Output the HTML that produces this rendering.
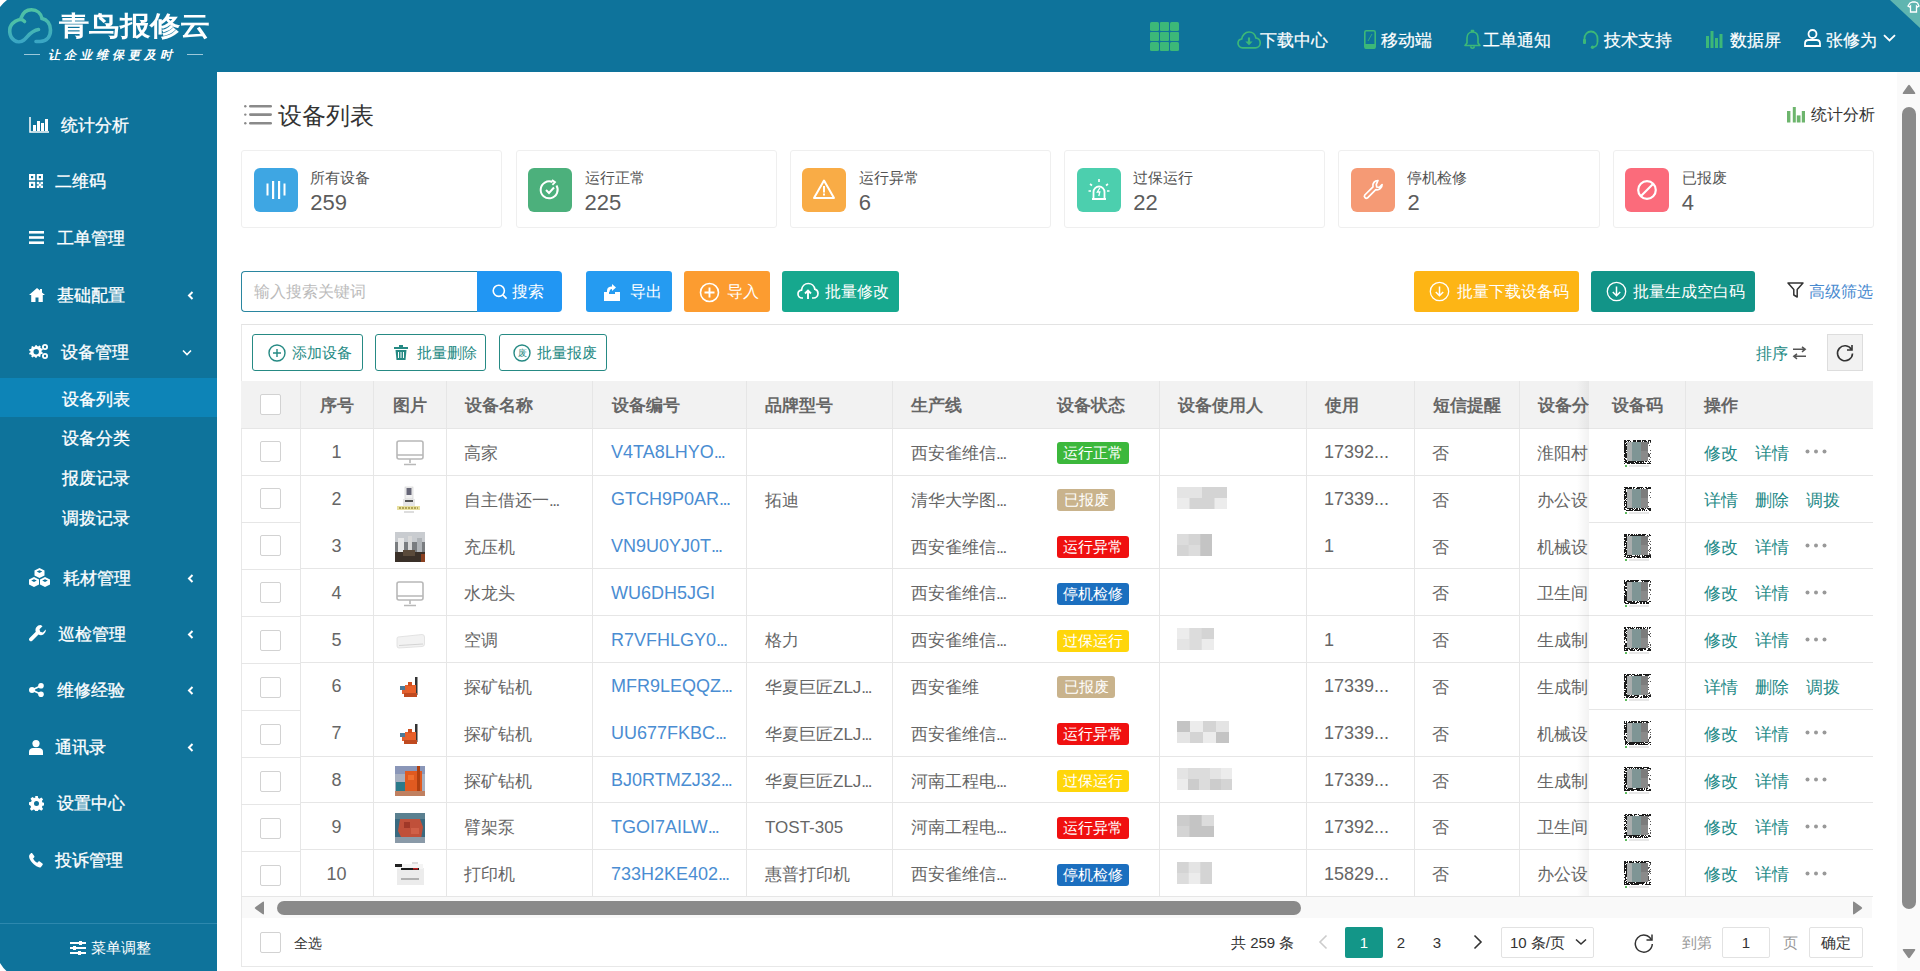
<!DOCTYPE html>
<html><head><meta charset="utf-8">
<style>
*{box-sizing:border-box;margin:0;padding:0}
html,body{width:1920px;height:971px;overflow:hidden;background:#fff;font-family:"Liberation Sans",sans-serif;color:#333}
.abs{position:absolute}
#hdr{position:absolute;left:0;top:0;width:1920px;height:72px;background:#0e739b;}
#side{position:absolute;left:0;top:72px;width:217px;height:899px;background:#0e739b}
.nav{position:absolute;top:31px;height:20px;line-height:20px;font-size:17px;-webkit-text-stroke:0.2px #fff;color:#fff;white-space:nowrap}
.mi{position:absolute;margin-top:-1px;left:0;width:217px;height:40px;color:#fff;font-size:17px;-webkit-text-stroke:0.3px #fff;line-height:40px;white-space:nowrap}
.mi .ic{position:absolute;left:29px;top:0;height:40px;display:flex;align-items:center}
.mi .tx{position:absolute;top:1px}
.mi .ch{position:absolute;left:184px;top:0;font-size:12px}
.sub{position:absolute;left:0;width:217px;height:40px;line-height:40px;color:#fff;font-size:17px;-webkit-text-stroke:0.3px #fff;padding-left:62px}
#main{position:absolute;left:217px;top:71px;width:1680px;height:900px;background:#fff}
.card{position:absolute;top:150px;width:261.2px;height:78px;border:1px solid #efefef;border-radius:3px;background:#fff}
.cl{position:absolute;left:68px;top:17px;font-size:15px;line-height:20px;color:#555}
.cn{position:absolute;left:68px;top:40px;font-size:22px;line-height:24px;color:#5c5c5c}
.btn{position:absolute;top:271px;height:41px;border-radius:3px;color:#fff;font-size:16px;line-height:22px;white-space:nowrap}
.obtn{position:absolute;top:334px;height:37px;border:1px solid #268a84;border-radius:3px;color:#268a84;font-size:15px;line-height:20px;white-space:nowrap;background:#fff}
.th{position:absolute;top:395px;font-size:17px;line-height:22px;font-weight:bold;color:#666;white-space:nowrap}
.td{position:absolute;font-size:17px;line-height:22px;color:#666;white-space:nowrap}
.td.lk{color:#4a8dd2}
.td.ak{color:#1f8a88}
.cb{position:absolute;width:21px;height:21px;border:1px solid #d2d2d2;border-radius:2px;background:#fff}
.bdg{position:absolute;height:22px;border-radius:3px;color:#fff;font-size:15px;line-height:22px;text-align:center;white-space:nowrap}
.blur{position:absolute;height:16px;background:linear-gradient(90deg,#ddd 0,#ccc 30%,#e4e4e4 55%,#bbb 80%,#e8e8e8 100%);filter:blur(1.5px)}
.dd{letter-spacing:-1.5px}
.td.lat{font-size:18px}
</style></head><body>
<div id="hdr">
  <div class="abs" style="left:59px;top:8px;font-size:30px;font-weight:bold;color:#fff;letter-spacing:0px;line-height:36px;transform:scale(1.01,0.9);transform-origin:0 55%">青鸟报修云</div>
  <div class="abs" style="left:24px;top:54px;width:16px;height:1px;background:#9cc8da"></div>
  <div class="abs" style="left:48px;top:46px;font-size:12px;color:#fff;letter-spacing:4px;line-height:18px;font-family:'Liberation Serif',serif;font-style:italic;font-weight:bold">让企业维保更及时</div>
  <div class="abs" style="left:187px;top:54px;width:16px;height:1px;background:#9cc8da"></div>

  <svg class="abs" style="left:0;top:0" width="60" height="50" viewBox="0 0 60 50"><defs><linearGradient id="cg" x1="0" y1="0" x2="0" y2="1"><stop offset="0" stop-color="#4fc3a3"/><stop offset="1" stop-color="#3aa6c4"/></linearGradient></defs><g stroke="url(#cg)" stroke-width="3.6" fill="none" stroke-linecap="round"><path d="M24.500 21.500C21.500 17.500 15.500 20.500 12.500 23.500C8.500 27.500 8.500 36.500 14.500 40.500C17 42.300 21 42.300 24 40C28 36.500 31 30.500 38.500 29.500"/><path d="M21 18C23 12.500 27 9.800 31.500 9.800C37 9.800 41 13.500 42 18.500C47 19.500 50.500 24 50.500 30C50.500 37 46.500 41.500 40 41.500H36"/></g></svg>
  <svg class="abs" style="left:1150px;top:22px" width="29" height="29" viewBox="0 0 29 29" fill="#3cb878"><rect x="0" y="0" width="9" height="9" rx="1.5"/><rect x="10" y="0" width="9" height="9" rx="1"/><rect x="20" y="0" width="9" height="9" rx="1.5"/><rect x="0" y="10" width="9" height="9" rx="1"/><rect x="10" y="10" width="9" height="9" rx="1"/><rect x="20" y="10" width="9" height="9" rx="1"/><rect x="0" y="20" width="9" height="9" rx="1.5"/><rect x="10" y="20" width="9" height="9" rx="1"/><rect x="20" y="20" width="9" height="9" rx="1.5"/></svg>
  <svg class="abs" style="left:1237px;top:31px" width="24" height="18" viewBox="0 0 24 18"><path d="M5.500 16.800C3 16.800 1 14.800 1 12.300c0-2.200 1.600-4 3.700-4.300C5.200 4.200 8.300 1 12 1c3.500 0 6.300 2.600 6.900 6 2.500.3 4.300 2.400 4.300 4.900 0 2.700-2.200 4.900-4.900 4.900z" stroke="#3cb878" stroke-width="1.700" fill="none"/><path d="M12 6.500v6" stroke="#3cb878" stroke-width="2.200"/><path d="M8.300 10.500h7.400L12 14.300z" fill="#3cb878"/></svg>
  <svg class="abs" style="left:1364px;top:30px" width="12" height="19" viewBox="0 0 12 19"><rect x="0.800" y="0.800" width="10.400" height="17.400" rx="1.500" stroke="#3cb878" stroke-width="1.600" fill="none"/><rect x="1" y="14" width="10" height="4.500" fill="#3cb878"/><path d="M8 4L4 11" stroke="#3cb878" stroke-width="0.8"/></svg>
  <svg class="abs" style="left:1464px;top:29px" width="17" height="20" viewBox="0 0 17 20"><path d="M8.500 3C5 3 3 5.500 3 9v5l-2 2.500h15L14 14V9c0-3.500-2-6-5.500-6zM6.500 17.500c.3 1 1 1.700 2 1.700s1.700-.7 2-1.700M7.500 3V1.500h2V3" stroke="#3cb878" stroke-width="1.600" fill="none" stroke-linejoin="round"/></svg>
  <svg class="abs" style="left:1582px;top:30px" width="18" height="19" viewBox="0 0 18 19"><path d="M2.500 11V8.500C2.500 4.500 5.300 1.500 9 1.500s6.500 3 6.500 7V12" stroke="#3cb878" stroke-width="1.800" fill="none"/><path d="M15.500 12c0 3-2 5-5 5.300" stroke="#3cb878" stroke-width="1.600" fill="none"/><rect x="1" y="9" width="3" height="5" rx="1" fill="#3cb878"/><circle cx="10.500" cy="17.300" r="1.700" fill="#3cb878"/></svg>
  <svg class="abs" style="left:1706px;top:31px" width="17" height="17" viewBox="0 0 17 17" fill="#3cb878"><rect x="0" y="5" width="3" height="12"/><rect x="4.500" y="0" width="3" height="17"/><rect x="9" y="7" width="3" height="10"/><rect x="13.500" y="3" width="3" height="14"/></svg>
  <svg class="abs" style="left:1804px;top:29px" width="17" height="18" viewBox="0 0 17 18"><circle cx="8.500" cy="5" r="4" stroke="#fff" stroke-width="1.800" fill="none"/><path d="M1 17v-2.500c0-2 1.500-3.500 3.500-3.500h8c2 0 3.500 1.500 3.500 3.500V17z" stroke="#fff" stroke-width="1.800" fill="none"/></svg>
  <svg class="abs" style="left:1883px;top:34px" width="13" height="8" viewBox="0 0 13 8"><path d="M1 1.200l5.500 5.300 5.500-5.300" stroke="#fff" stroke-width="1.800" fill="none"/></svg>
  <svg class="abs" style="left:1890px;top:0" width="30" height="28" viewBox="0 0 30 28"><path d="M0 0H30V28z" fill="#5fb5b0"/><path d="M20 3l2.500-1h2.500l2.500 1 1.500 3-1.500 1-1-1v6h-6V6l-1 1-1.500-1z" stroke="#fff" stroke-width="1.300" fill="none"/></svg>
  <div class="nav" style="left:1260px">下载中心</div>
  <div class="nav" style="left:1381px">移动端</div>
  <div class="nav" style="left:1483px">工单通知</div>
  <div class="nav" style="left:1604px">技术支持</div>
  <div class="nav" style="left:1730px">数据屏</div>
  <div class="nav" style="left:1826px">张修为</div>
</div>
<div id="side">
  <!-- 统计分析 -->
  <div class="mi" style="top:34px"><svg class="abs" style="left:29px;top:12px" width="20" height="16" viewBox="0 0 20 16"><path d="M1 0V15H20" stroke="#fff" stroke-width="1.5" fill="none"/><rect x="4" y="8" width="3" height="6" fill="#fff"/><rect x="8" y="4" width="3" height="10" fill="#fff"/><rect x="12" y="6" width="3" height="8" fill="#fff"/><rect x="16" y="2" width="3" height="12" fill="#fff"/></svg><span class="tx" style="left:61px">统计分析</span></div>
  <!-- 二维码 -->
  <div class="mi" style="top:90px"><svg class="abs" style="left:29px;top:13px" width="14" height="14" viewBox="0 0 14 14" fill="#fff"><path d="M0 0h6.200v6.200H0zM2 2v2.200h2.200V2zM7.800 0H14v6.200H7.800zM9.800 2v2.200H12V2zM0 7.800h6.200V14H0zM2 9.800V12h2.200V9.800z" fill-rule="evenodd"/><rect x="7.800" y="7.800" width="2.500" height="2.500"/><rect x="11.500" y="7.800" width="2.500" height="2.500"/><rect x="9.700" y="9.700" width="2.500" height="2.500"/><rect x="7.800" y="11.500" width="2.500" height="2.500"/><rect x="11.500" y="11.500" width="2.500" height="2.500"/></svg><span class="tx" style="left:55px">二维码</span></div>
  <!-- 工单管理 -->
  <div class="mi" style="top:147px"><svg class="abs" style="left:29px;top:13px" width="15" height="13" viewBox="0 0 15 13" fill="#fff"><rect y="0" width="15" height="2.6"/><rect y="5.2" width="15" height="2.6"/><rect y="10.4" width="15" height="2.6"/></svg><span class="tx" style="left:57px">工单管理</span></div>
  <!-- 基础配置 -->
  <div class="mi" style="top:204px"><svg class="abs" style="left:29px;top:13px" width="16" height="14" viewBox="0 0 16 14" fill="#fff"><path d="M8 0L0 7h2.2v7h4.3V9.5h3V14h4.3V7H16L13 4.4V1h-2v1.6z"/></svg><span class="tx" style="left:57px">基础配置</span><svg class="abs" style="left:187px;top:16px" width="7" height="9" viewBox="0 0 7 9"><path d="M5.5 1L2 4.5 5.5 8" stroke="#fff" stroke-width="2" fill="none"/></svg></div>
  <!-- 设备管理 -->
  <div class="mi" style="top:261px"><svg class="abs" style="left:29px;top:11px" width="20" height="17" viewBox="0 0 20 17" fill="#fff"><path d="M7 3l1.3.4.9-1 1.5.9-.4 1.3.9 1 1.3-.2.4 1.7-1.3.5v1.3l1.3.5-.4 1.7-1.3-.2-.9 1 .4 1.3-1.5.9-.9-1-1.3.4-.3 1.3H5.3L5 14l-1.3-.4-.9 1-1.5-.9.4-1.3-.9-1L-.5 11.6-.9 9.9l1.3-.5V8.1L-.9 7.6-.5 5.9.8 6.1l.9-1L1.3 3.8l1.5-.9.9 1L5 3.5 5.3 2.2h1.7zM6.2 6a2.7 2.7 0 100 5.4 2.7 2.7 0 000-5.4z" transform="translate(1,0)"/><circle cx="16" cy="4" r="3" /><circle cx="16" cy="4" r="1.2" fill="#0e739b"/><circle cx="16" cy="13" r="3"/><circle cx="16" cy="13" r="1.2" fill="#0e739b"/></svg><span class="tx" style="left:61px">设备管理</span><svg class="abs" style="left:182px;top:17px" width="10" height="7" viewBox="0 0 10 7"><path d="M1 1.5l4 4 4-4" stroke="#fff" stroke-width="1.6" fill="none"/></svg></div>
  <div class="abs" style="left:0;top:306px;width:217px;height:39px;background:#0d84b7"></div>
  <div class="sub" style="top:308px">设备列表</div>
  <div class="sub" style="top:347px">设备分类</div>
  <div class="sub" style="top:387px">报废记录</div>
  <div class="sub" style="top:427px">调拨记录</div>
  <!-- 耗材管理 -->
  <div class="mi" style="top:487px"><svg class="abs" style="left:29px;top:10px" width="21" height="19" viewBox="0 0 21 19" fill="#fff"><path d="M10.5 0l5 2.5v5l-5 2.5-5-2.5v-5z"/><path d="M5 9l5 2.5v5L5 19 0 16.5v-5z"/><path d="M16 9l5 2.5v5L16 19l-5-2.5v-5z"/><path d="M10.5 2.2l2.8 1.4-2.8 1.4-2.8-1.4zM5 11.2l2.8 1.4L5 14l-2.8-1.4zM16 11.2l2.8 1.4L16 14l-2.8-1.4z" fill="#0e739b"/></svg><span class="tx" style="left:63px">耗材管理</span><svg class="abs" style="left:187px;top:16px" width="7" height="9" viewBox="0 0 7 9"><path d="M5.5 1L2 4.5 5.5 8" stroke="#fff" stroke-width="2" fill="none"/></svg></div>
  <!-- 巡检管理 -->
  <div class="mi" style="top:543px"><svg class="abs" style="left:29px;top:11px" width="17" height="17" viewBox="0 0 17 17" fill="#fff"><path d="M11.5 0a5 5 0 00-4.7 6.8L.6 13a1.9 1.9 0 002.7 2.7l6.2-6.2A5 5 0 0016.8 4.5l-3 3-2.6-.7-.7-2.6 3-3A5 5 0 0011.5 0z"/></svg><span class="tx" style="left:58px">巡检管理</span><svg class="abs" style="left:187px;top:16px" width="7" height="9" viewBox="0 0 7 9"><path d="M5.5 1L2 4.5 5.5 8" stroke="#fff" stroke-width="2" fill="none"/></svg></div>
  <!-- 维修经验 -->
  <div class="mi" style="top:599px"><svg class="abs" style="left:29px;top:13px" width="15" height="14" viewBox="0 0 15 14" fill="#fff"><circle cx="3" cy="7" r="3"/><circle cx="12" cy="2.8" r="2.8"/><circle cx="12" cy="11.2" r="2.8"/><path d="M3 7L12 2.8M3 7l9 4.2" stroke="#fff" stroke-width="1.8"/></svg><span class="tx" style="left:57px">维修经验</span><svg class="abs" style="left:187px;top:16px" width="7" height="9" viewBox="0 0 7 9"><path d="M5.5 1L2 4.5 5.5 8" stroke="#fff" stroke-width="2" fill="none"/></svg></div>
  <!-- 通讯录 -->
  <div class="mi" style="top:656px"><svg class="abs" style="left:29px;top:13px" width="14" height="15" viewBox="0 0 14 15" fill="#fff"><circle cx="7" cy="3.6" r="3.6"/><path d="M0 15v-3.5C0 9.3 2 8 4 8h6c2 0 4 1.3 4 3.5V15z"/></svg><span class="tx" style="left:55px">通讯录</span><svg class="abs" style="left:187px;top:16px" width="7" height="9" viewBox="0 0 7 9"><path d="M5.5 1L2 4.5 5.5 8" stroke="#fff" stroke-width="2" fill="none"/></svg></div>
  <!-- 设置中心 -->
  <div class="mi" style="top:712px"><svg class="abs" style="left:29px;top:13px" width="15" height="15" viewBox="0 0 15 15" fill="#fff"><path d="M6.2 0h2.6l.4 2.1 1.3.6 1.8-1.2 1.8 1.8-1.2 1.8.6 1.3 2.1.4v2.6l-2.1.4-.6 1.3 1.2 1.8-1.8 1.8-1.8-1.2-1.3.6-.4 2.1H6.2l-.4-2.1-1.3-.6-1.8 1.2-1.8-1.8 1.2-1.8-.6-1.3L0 8.8V6.2l2.1-.4.6-1.3-1.2-1.8 1.8-1.8 1.8 1.2 1.3-.6zM7.5 5a2.5 2.5 0 100 5 2.5 2.5 0 000-5z" fill-rule="evenodd"/></svg><span class="tx" style="left:57px">设置中心</span></div>
  <!-- 投诉管理 -->
  <div class="mi" style="top:769px"><svg class="abs" style="left:29px;top:13px" width="15" height="15" viewBox="0 0 15 15" fill="#fff"><path d="M3.2.3l2 2.6c.4.5.3 1.1-.1 1.5l-1 1c.8 1.8 2.3 3.4 4.2 4.3l1-1c.4-.4 1.1-.5 1.5-.1l2.6 2c.5.4.5 1 .1 1.5l-1.5 1.8C10.700 15.900 4.300 12 1.400 7.300-.3 4.500-.4 2.200 1.200 1l.5-.5c.4-.5 1.100-.5 1.500-.2z"/></svg><span class="tx" style="left:55px">投诉管理</span></div>
  <div class="abs" style="left:0;top:851px;width:217px;height:1px;background:#2d88ae"></div>
  <svg class="abs" style="left:70px;top:869px" width="16" height="14" viewBox="0 0 16 14" fill="#fff"><rect y="1" width="16" height="2"/><rect y="6" width="16" height="2"/><rect y="11" width="16" height="2"/><rect x="9" y="0" width="3" height="4"/><rect x="3" y="5" width="3" height="4"/><rect x="8" y="10" width="3" height="4"/></svg>
  <div class="abs" style="left:91px;top:865px;font-size:15px;line-height:22px;color:#fff">菜单调整</div>
</div>
<!--MAIN1-->
<svg class="abs" style="left:244px;top:105px" width="28" height="20" viewBox="0 0 28 20" fill="#8a8a8a"><circle cx="1.3" cy="1.300" r="1.200"/><circle cx="1.300" cy="9.600" r="1.200"/><circle cx="1.300" cy="18.300" r="1.200"/><rect x="5" y="0" width="23" height="2.600" rx="1.300"/><rect x="5" y="8.300" width="23" height="2.600" rx="1.300"/><rect x="5" y="17" width="23" height="2.600" rx="1.300"/></svg>
<div class="abs" style="left:278px;top:100px;font-size:24px;line-height:32px;color:#333">设备列表</div>
<svg class="abs" style="left:1787px;top:107px" width="18" height="16" viewBox="0 0 18 16" fill="#6db56d"><rect x="0" y="4" width="3.400" height="11.500"/><rect x="5.800" y="0" width="3" height="15.500"/><rect x="9.800" y="8.400" width="3.700" height="7.100"/><rect x="14.800" y="4" width="3.200" height="11.500"/></svg>
<div class="abs" style="left:1811px;top:104px;font-size:16px;line-height:22px;color:#333">统计分析</div>

<div class="card" style="left:241.25px"><svg class="abs" style="left:11.5px;top:17px;border-radius:6px;background:#3ea6e3" width="44" height="44" viewBox="0 0 44 44"><rect x="12.5" y="15.5" width="2" height="12" fill="#fff"/><rect x="18" y="13" width="2.2" height="18" fill="#fff"/><rect x="24" y="13" width="2.2" height="18" fill="#fff"/><rect x="29.5" y="15.5" width="2" height="12" fill="#fff"/></svg><div class="cl">所有设备</div><div class="cn">259</div></div>
<div class="card" style="left:515.55px"><svg class="abs" style="left:11.5px;top:17px;border-radius:6px;background:#4cb07c" width="44" height="44" viewBox="0 0 44 44"><path d="M28.5 17.5A8.5 8.5 0 1 1 24.500 14" stroke="#fff" stroke-width="2" fill="none"/><path d="M24 12l3 2.2-2.6 2.600" stroke="#fff" stroke-width="1.800" fill="none"/><path d="M18 22l3 3 5-5.500" stroke="#fff" stroke-width="2" fill="none"/></svg><div class="cl">运行正常</div><div class="cn">225</div></div>
<div class="card" style="left:789.85px"><svg class="abs" style="left:11.5px;top:17px;border-radius:6px;background:#f9ac46" width="44" height="44" viewBox="0 0 44 44"><path d="M22 12.500L32 30H12z" stroke="#fff" stroke-width="2" fill="none" stroke-linejoin="round"/><rect x="21" y="18" width="2" height="6.500" fill="#fff"/><rect x="21" y="25.500" width="2" height="2" fill="#fff"/></svg><div class="cl">运行异常</div><div class="cn">6</div></div>
<div class="card" style="left:1064.15px"><svg class="abs" style="left:11.5px;top:17px;border-radius:6px;background:#4ccfae" width="44" height="44" viewBox="0 0 44 44"><path d="M15 31h14M16.500 31v-7a5.500 5.500 0 0 1 11 0v7" stroke="#fff" stroke-width="1.800" fill="none"/><path d="M22 11v3M13 16l2 1.500M31 16l-2 1.500M11.500 23h2.500M30 23h2.500" stroke="#fff" stroke-width="1.600"/><path d="M22.800 20l-2.500 4h2.500l-1 4" stroke="#fff" stroke-width="1.300" fill="none"/></svg><div class="cl">过保运行</div><div class="cn">22</div></div>
<div class="card" style="left:1338.45px"><svg class="abs" style="left:11.5px;top:17px;border-radius:6px;background:#f59a75" width="44" height="44" viewBox="0 0 44 44"><path d="M27 12.500a5 5 0 0 0-5 6.300l-8.200 8.200a2 2 0 0 0 2.800 2.800l8.200-8.200a5 5 0 0 0 6.300-5l-2.800 2.800-2.600-.4-.4-2.600z" stroke="#fff" stroke-width="1.700" fill="none" stroke-linejoin="round"/></svg><div class="cl">停机检修</div><div class="cn">2</div></div>
<div class="card" style="left:1612.75px"><svg class="abs" style="left:11.5px;top:17px;border-radius:6px;background:#fb6b7b" width="44" height="44" viewBox="0 0 44 44"><circle cx="22" cy="22" r="8.800" stroke="#fff" stroke-width="2.200" fill="none"/><path d="M16 28l12-12" stroke="#fff" stroke-width="2.200"/></svg><div class="cl">已报废</div><div class="cn">4</div></div>
<!--/MAIN1-->
<!--MAIN2-->
<div class="abs" style="left:241px;top:271px;width:237px;height:41px;border:1px solid #2a86a0;border-right:none;border-radius:4px 0 0 4px;background:#fff"></div>
<div class="abs" style="left:254px;top:281px;font-size:16px;line-height:22px;color:#bbb">输入搜索关键词</div>
<div class="btn" style="left:477px;width:85px;background:#2196f3;border-radius:0 4px 4px 0"><svg class="abs" style="left:15px;top:13px" width="16" height="16" viewBox="0 0 16 16"><circle cx="6.800" cy="6.800" r="5.600" stroke="#fff" stroke-width="1.600" fill="none"/><path d="M10.800 10.800l3.800 3.800" stroke="#fff" stroke-width="1.800"/></svg><span class="abs" style="left:35px;top:9.5px">搜索</span></div>
<div class="btn" style="left:586px;width:86px;background:#259bf1"><svg class="abs" style="left:17px;top:11px" width="18" height="19" viewBox="0 0 18 19" fill="#fff"><path d="M1 10h5v2h6v-2h5v9H1z"/><path d="M4 10V8.500C4 6 6 4.500 9 4.500V2l4 3.500-4 3.500V7C7.500 7 6.500 8 6.500 10z"/></svg><span class="abs" style="left:44px;top:9.5px">导出</span></div>
<div class="btn" style="left:684px;width:86px;background:#fc9c30"><svg class="abs" style="left:15px;top:11px" width="21" height="21" viewBox="0 0 21 21"><circle cx="10.500" cy="10.500" r="9" stroke="#fff" stroke-width="1.600" fill="none"/><path d="M10.500 5.500v10M5.500 10.500h10" stroke="#fff" stroke-width="1.900"/></svg><span class="abs" style="left:43px;top:9.5px">导入</span></div>
<div class="btn" style="left:782px;width:117px;background:#16a88e"><svg class="abs" style="left:15px;top:11px" width="22" height="18" viewBox="0 0 22 18"><path d="M6 16H5C2.800 16 1 14.200 1 12c0-2 1.500-3.700 3.500-3.900C5 4.300 7.800 1.500 11.300 1.500c3.300 0 6 2.500 6.500 5.700 1.800.4 3.200 2.100 3.200 4.300 0 2.500-2 4.500-4.500 4.500H15" stroke="#fff" stroke-width="1.700" fill="none"/><path d="M11 17V9M8 11.500l3-3 3 3" stroke="#fff" stroke-width="1.900" fill="none"/></svg><span class="abs" style="left:43px;top:9.5px">批量修改</span></div>
<div class="btn" style="left:1414px;width:165px;background:#fdb515"><svg class="abs" style="left:15px;top:10px" width="21" height="21" viewBox="0 0 21 21"><circle cx="10.500" cy="10.500" r="9.200" stroke="#fff" stroke-width="1.300" fill="none"/><path d="M10.500 5.500v9M6.800 11l3.700 3.700 3.700-3.700" stroke="#fff" stroke-width="1.500" fill="none"/></svg><span class="abs" style="left:43px;top:9.5px">批量下载设备码</span></div>
<div class="btn" style="left:1591px;width:164px;background:#129488"><svg class="abs" style="left:15px;top:10px" width="21" height="21" viewBox="0 0 21 21"><circle cx="10.500" cy="10.500" r="9.200" stroke="#fff" stroke-width="1.300" fill="none"/><path d="M10.500 5.500v9M6.800 11l3.700 3.700 3.700-3.700" stroke="#fff" stroke-width="1.500" fill="none"/></svg><span class="abs" style="left:42px;top:9.5px">批量生成空白码</span></div>
<svg class="abs" style="left:1787px;top:282px" width="17" height="16" viewBox="0 0 17 16"><path d="M1 1h15l-5.800 6.500V15l-3.400-2V7.500z" stroke="#333" stroke-width="1.500" fill="none" stroke-linejoin="round"/></svg>
<div class="abs" style="left:1809px;top:280.5px;font-size:15.6px;line-height:22px;color:#4a8bd0">高级筛选</div>

<div class="abs" style="left:241px;top:324px;width:1632px;height:643px;border:1px solid #e8e8e8;border-right:none;border-top-color:#e3e3e3"></div>
<div class="obtn" style="left:252px;width:111px"><svg class="abs" style="left:15px;top:9px" width="18" height="18" viewBox="0 0 18 18"><circle cx="9" cy="9" r="8" stroke="#268a84" stroke-width="1.400" fill="none"/><path d="M9 5v8M5 9h8" stroke="#268a84" stroke-width="1.400"/></svg><span class="abs" style="left:39px;top:8px">添加设备</span></div>
<div class="obtn" style="left:375px;width:111px"><svg class="abs" style="left:18px;top:10px" width="14" height="15" viewBox="0 0 14 15" fill="#268a84"><rect x="0" y="2" width="14" height="2"/><rect x="5" y="0" width="4" height="2"/><path d="M1.500 5h11l-1 10h-9z"/><path d="M4.500 7v6M7 7v6M9.500 7v6" stroke="#fff" stroke-width="1"/></svg><span class="abs" style="left:41px;top:8px">批量删除</span></div>
<div class="obtn" style="left:499px;width:108px"><svg class="abs" style="left:13px;top:9px" width="18" height="18" viewBox="0 0 18 18"><circle cx="9" cy="9" r="8" stroke="#268a84" stroke-width="1.400" fill="none"/><text x="9" y="12.300" font-size="8.500" text-anchor="middle" fill="#268a84">废</text></svg><span class="abs" style="left:37px;top:8px">批量报废</span></div>
<div class="abs" style="left:1756px;top:343px;font-size:16px;line-height:22px;color:#268a84">排序</div>
<svg class="abs" style="left:1792px;top:346px" width="15" height="14" viewBox="0 0 15 14"><path d="M1 3.300H13M10 0.800l3.200 2.500-3.200 2.500M14 10.300H2M5 7.800l-3.200 2.500 3.200 2.500" stroke="#555" stroke-width="1.500" fill="none"/></svg>
<div class="abs" style="left:1827px;top:334px;width:36px;height:37px;background:#f2f2f2;border:1px solid #ddd"><svg class="abs" style="left:7px;top:8px" width="20" height="20" viewBox="0 0 20 20"><path d="M16.500 6.500A7.500 7.500 0 1 0 17.500 10.500" stroke="#333" stroke-width="1.600" fill="none"/><path d="M17 2v5h-5" stroke="#333" stroke-width="1.600" fill="none"/></svg></div>

<!--/MAIN2-->
<!--MAIN3-->
<div class="abs" style="left:241px;top:381px;width:1632px;height:47px;background:#f2f2f2"></div>
<div class="abs" style="left:300px;top:381px;width:1px;height:515px;background:#e6e6e6"></div>
<div class="abs" style="left:373px;top:381px;width:1px;height:515px;background:#e6e6e6"></div>
<div class="abs" style="left:446px;top:381px;width:1px;height:515px;background:#e6e6e6"></div>
<div class="abs" style="left:592px;top:381px;width:1px;height:515px;background:#e6e6e6"></div>
<div class="abs" style="left:746px;top:381px;width:1px;height:515px;background:#e6e6e6"></div>
<div class="abs" style="left:892px;top:381px;width:1px;height:515px;background:#e6e6e6"></div>
<div class="abs" style="left:1159px;top:381px;width:1px;height:515px;background:#e6e6e6"></div>
<div class="abs" style="left:1306px;top:381px;width:1px;height:515px;background:#e6e6e6"></div>
<div class="abs" style="left:1414px;top:381px;width:1px;height:515px;background:#e6e6e6"></div>
<div class="abs" style="left:1519px;top:381px;width:1px;height:515px;background:#e6e6e6"></div>
<div class="abs" style="left:241px;top:428.0px;width:59px;height:1px;background:#e6e6e6"></div>
<div class="abs" style="left:300px;top:428.0px;width:1289px;height:1px;background:#e6e6e6"></div>
<div class="abs" style="left:241px;top:475.0px;width:59px;height:1px;background:#e6e6e6"></div>
<div class="abs" style="left:300px;top:474.8px;width:1289px;height:1px;background:#e6e6e6"></div>
<div class="abs" style="left:241px;top:522.1px;width:59px;height:1px;background:#e6e6e6"></div>
<div class="abs" style="left:241px;top:569.1px;width:59px;height:1px;background:#e6e6e6"></div>
<div class="abs" style="left:300px;top:568.4px;width:1289px;height:1px;background:#e6e6e6"></div>
<div class="abs" style="left:241px;top:616.1px;width:59px;height:1px;background:#e6e6e6"></div>
<div class="abs" style="left:300px;top:615.2px;width:1289px;height:1px;background:#e6e6e6"></div>
<div class="abs" style="left:241px;top:663.1px;width:59px;height:1px;background:#e6e6e6"></div>
<div class="abs" style="left:300px;top:662.0px;width:1289px;height:1px;background:#e6e6e6"></div>
<div class="abs" style="left:241px;top:710.2px;width:59px;height:1px;background:#e6e6e6"></div>
<div class="abs" style="left:241px;top:757.2px;width:59px;height:1px;background:#e6e6e6"></div>
<div class="abs" style="left:300px;top:755.6px;width:1289px;height:1px;background:#e6e6e6"></div>
<div class="abs" style="left:241px;top:804.2px;width:59px;height:1px;background:#e6e6e6"></div>
<div class="abs" style="left:300px;top:802.4px;width:1289px;height:1px;background:#e6e6e6"></div>
<div class="abs" style="left:241px;top:851.3px;width:59px;height:1px;background:#e6e6e6"></div>
<div class="abs" style="left:300px;top:849.2px;width:1289px;height:1px;background:#e6e6e6"></div>
<div class="abs" style="left:241px;top:896.0px;width:59px;height:1px;background:#e6e6e6"></div>
<div class="abs" style="left:300px;top:896.0px;width:1289px;height:1px;background:#e6e6e6"></div>
<div class="th" style="left:300px;width:73px;text-align:center">序号</div>
<div class="th" style="left:373px;width:73px;text-align:center">图片</div>
<div class="th" style="left:465px">设备名称</div>
<div class="th" style="left:612px">设备编号</div>
<div class="th" style="left:765px">品牌型号</div>
<div class="th" style="left:911px">生产线</div>
<div class="th" style="left:1057px">设备状态</div>
<div class="th" style="left:1178px">设备使用人</div>
<div class="th" style="left:1325px">使用</div>
<div class="th" style="left:1433px">短信提醒</div>
<div class="th" style="left:1538px">设备分类</div>
<div class="cb" style="left:260px;top:394px"></div>
<div class="cb" style="left:260px;top:440.9px"></div>
<div class="td lat" style="left:300px;width:73px;text-align:center;top:441.4px">1</div>
<svg class="abs" style="left:396px;top:440.4px" width="28" height="26" viewBox="0 0 28 26"><rect x="1" y="1" width="26" height="18" rx="2" stroke="#b8b8b8" stroke-width="1.600" fill="none"/><path d="M1 15h26M14 19v4M8 24.500h12" stroke="#b8b8b8" stroke-width="1.600"/></svg>
<div class="td" style="left:464px;top:442.9px">高家</div>
<div class="td lk lat" style="left:611px;top:441.4px">V4TA8LHYO<span class="dd">...</span></div>
<div class="td" style="left:911px;top:442.9px">西安雀维信<span class="dd">...</span></div>
<div class="bdg" style="left:1057px;top:442.4px;width:72px;background:#3cb83c">运行正常</div>
<div class="td lat" style="left:1324px;top:441.4px">17392...</div>
<div class="td" style="left:1432px;top:442.9px">否</div>
<div class="td" style="left:1537px;top:442.9px">淮阳村</div>
<div class="cb" style="left:260px;top:488.1px"></div>
<div class="td lat" style="left:300px;width:73px;text-align:center;top:488.2px">2</div>
<svg class="abs" style="left:396px;top:485.2px" width="25" height="30" viewBox="0 0 25 30"><rect x="9" y="2" width="8" height="12" fill="#f0f0f0" stroke="#ccc" stroke-width=".6"/><rect x="10.500" y="3" width="5" height="7" fill="#667"/><rect x="7" y="14" width="12" height="8" fill="#e6e6e6"/><rect x="9" y="15" width="8" height="2" fill="#555"/><rect x="1" y="21" width="23" height="4" fill="#e8e0a0"/><path d="M3 23h19" stroke="#7a6a10" stroke-width="1.200" stroke-dasharray="2 1"/><rect x="8" y="26" width="10" height="2" fill="#ddd"/></svg>
<div class="td" style="left:464px;top:489.7px">自主借还一<span class="dd">...</span></div>
<div class="td lk lat" style="left:611px;top:488.2px">GTCH9P0AR<span class="dd">...</span></div>
<div class="td" style="left:765px;top:489.7px">拓迪</div>
<div class="td" style="left:911px;top:489.7px">清华大学图<span class="dd">...</span></div>
<div class="bdg" style="left:1057px;top:489.2px;width:58px;background:#c9b38c">已报废</div>
<svg class="abs" style="left:1177px;top:487.2px;filter:blur(0.6px)" width="50" height="22" viewBox="0 0 50 22"><rect x="0.0" y="0" width="13.0" height="11" fill="rgb(228,228,228)"/><rect x="12.5" y="0" width="13.0" height="11" fill="rgb(228,228,228)"/><rect x="25.0" y="0" width="13.0" height="11" fill="rgb(212,212,212)"/><rect x="37.5" y="0" width="13.0" height="11" fill="rgb(212,212,212)"/><rect x="0.0" y="11" width="13.0" height="11" fill="rgb(236,236,236)"/><rect x="12.5" y="11" width="13.0" height="11" fill="rgb(212,212,212)"/><rect x="25.0" y="11" width="13.0" height="11" fill="rgb(212,212,212)"/><rect x="37.5" y="11" width="13.0" height="11" fill="rgb(236,236,236)"/></svg>
<div class="td lat" style="left:1324px;top:488.2px">17339...</div>
<div class="td" style="left:1432px;top:489.7px">否</div>
<div class="td" style="left:1537px;top:489.7px">办公设</div>
<div class="cb" style="left:260px;top:535.2px"></div>
<div class="td lat" style="left:300px;width:73px;text-align:center;top:535.0px">3</div>
<svg class="abs" style="left:395px;top:531.5px" width="30" height="30" viewBox="0 0 30 30"><rect width="30" height="30" fill="#7a7d80"/><rect width="30" height="10" fill="#c9ccd0"/><rect x="3" y="6" width="6" height="18" fill="#e8e8e8"/><rect x="13" y="4" width="4" height="20" fill="#d8d8d8"/><rect x="22" y="6" width="5" height="14" fill="#b0b4b8"/><rect y="20" width="30" height="10" fill="#3a3028"/><rect x="8" y="18" width="12" height="6" fill="#5a4a3a"/><rect x="26" y="22" width="4" height="8" fill="#8a4020"/></svg>
<div class="td" style="left:464px;top:536.5px">充压机</div>
<div class="td lk lat" style="left:611px;top:535.0px">VN9U0YJ0T<span class="dd">...</span></div>
<div class="td" style="left:911px;top:536.5px">西安雀维信<span class="dd">...</span></div>
<div class="bdg" style="left:1057px;top:536.0px;width:72px;background:#f01010">运行异常</div>
<svg class="abs" style="left:1177px;top:534.0px;filter:blur(0.6px)" width="35" height="22" viewBox="0 0 35 22"><rect x="0.0" y="0" width="12.2" height="11" fill="rgb(220,220,220)"/><rect x="11.7" y="0" width="12.2" height="11" fill="rgb(212,212,212)"/><rect x="23.3" y="0" width="12.2" height="11" fill="rgb(196,196,196)"/><rect x="0.0" y="11" width="12.2" height="11" fill="rgb(212,212,212)"/><rect x="11.7" y="11" width="12.2" height="11" fill="rgb(220,220,220)"/><rect x="23.3" y="11" width="12.2" height="11" fill="rgb(196,196,196)"/></svg>
<div class="td lat" style="left:1324px;top:535.0px">1</div>
<div class="td" style="left:1432px;top:536.5px">否</div>
<div class="td" style="left:1537px;top:536.5px">机械设</div>
<div class="cb" style="left:260px;top:582.4px"></div>
<div class="td lat" style="left:300px;width:73px;text-align:center;top:581.8px">4</div>
<svg class="abs" style="left:396px;top:580.8px" width="28" height="26" viewBox="0 0 28 26"><rect x="1" y="1" width="26" height="18" rx="2" stroke="#b8b8b8" stroke-width="1.600" fill="none"/><path d="M1 15h26M14 19v4M8 24.500h12" stroke="#b8b8b8" stroke-width="1.600"/></svg>
<div class="td" style="left:464px;top:583.3px">水龙头</div>
<div class="td lk lat" style="left:611px;top:581.8px">WU6DH5JGI</div>
<div class="td" style="left:911px;top:583.3px">西安雀维信<span class="dd">...</span></div>
<div class="bdg" style="left:1057px;top:582.8px;width:72px;background:#1b6fbf">停机检修</div>
<div class="td" style="left:1432px;top:583.3px">否</div>
<div class="td" style="left:1537px;top:583.3px">卫生间</div>
<div class="cb" style="left:260px;top:629.6px"></div>
<div class="td lat" style="left:300px;width:73px;text-align:center;top:628.6px">5</div>
<svg class="abs" style="left:396px;top:632.6px" width="29" height="16" viewBox="0 0 29 16"><path d="M2 4L26 1.500Q28.500 1.500 28.500 4V11Q28.500 13.500 26 13.500L3 15Q1 15 1 13V6Q1 4 2 4z" fill="#f2f2f2" stroke="#ddd" stroke-width=".8"/><path d="M3 12.500L27 11" stroke="#ccc" stroke-width=".8"/></svg>
<div class="td" style="left:464px;top:630.1px">空调</div>
<div class="td lk lat" style="left:611px;top:628.6px">R7VFHLGY0<span class="dd">...</span></div>
<div class="td" style="left:765px;top:630.1px">格力</div>
<div class="td" style="left:911px;top:630.1px">西安雀维信<span class="dd">...</span></div>
<div class="bdg" style="left:1057px;top:629.6px;width:72px;background:#ffd60a">过保运行</div>
<svg class="abs" style="left:1177px;top:627.6px;filter:blur(0.6px)" width="37" height="22" viewBox="0 0 37 22"><rect x="0.0" y="0" width="12.8" height="11" fill="rgb(236,236,236)"/><rect x="12.3" y="0" width="12.8" height="11" fill="rgb(220,220,220)"/><rect x="24.7" y="0" width="12.8" height="11" fill="rgb(212,212,212)"/><rect x="0.0" y="11" width="12.8" height="11" fill="rgb(228,228,228)"/><rect x="12.3" y="11" width="12.8" height="11" fill="rgb(220,220,220)"/><rect x="24.7" y="11" width="12.8" height="11" fill="rgb(236,236,236)"/></svg>
<div class="td lat" style="left:1324px;top:628.6px">1</div>
<div class="td" style="left:1432px;top:630.1px">否</div>
<div class="td" style="left:1537px;top:630.1px">生成制</div>
<div class="cb" style="left:260px;top:676.8px"></div>
<div class="td lat" style="left:300px;width:73px;text-align:center;top:675.4px">6</div>
<svg class="abs" style="left:400px;top:677.4px" width="20" height="22" viewBox="0 0 20 22"><rect x="15" y="0" width="2.500" height="18" fill="#333"/><rect x="5" y="8" width="11" height="9" fill="#e8602a"/><rect x="2" y="11" width="5" height="6" fill="#e06030"/><rect x="0" y="9" width="5" height="4" fill="#4a7a9a"/><rect x="4" y="16" width="13" height="4" fill="#c04a20"/><rect x="8" y="5" width="4" height="4" fill="#d05020"/></svg>
<div class="td" style="left:464px;top:676.9px">探矿钻机</div>
<div class="td lk lat" style="left:611px;top:675.4px">MFR9LEQQZ<span class="dd">...</span></div>
<div class="td" style="left:765px;top:676.9px">华夏巨匠ZLJ<span class="dd">...</span></div>
<div class="td" style="left:911px;top:676.9px">西安雀维</div>
<div class="bdg" style="left:1057px;top:676.4px;width:58px;background:#c9b38c">已报废</div>
<div class="td lat" style="left:1324px;top:675.4px">17339...</div>
<div class="td" style="left:1432px;top:676.9px">否</div>
<div class="td" style="left:1537px;top:676.9px">生成制</div>
<div class="cb" style="left:260px;top:723.9px"></div>
<div class="td lat" style="left:300px;width:73px;text-align:center;top:722.2px">7</div>
<svg class="abs" style="left:400px;top:724.2px" width="20" height="22" viewBox="0 0 20 22"><rect x="15" y="0" width="2.500" height="18" fill="#333"/><rect x="5" y="8" width="11" height="9" fill="#e8602a"/><rect x="2" y="11" width="5" height="6" fill="#e06030"/><rect x="0" y="9" width="5" height="4" fill="#4a7a9a"/><rect x="4" y="16" width="13" height="4" fill="#c04a20"/><rect x="8" y="5" width="4" height="4" fill="#d05020"/></svg>
<div class="td" style="left:464px;top:723.7px">探矿钻机</div>
<div class="td lk lat" style="left:611px;top:722.2px">UU677FKBC<span class="dd">...</span></div>
<div class="td" style="left:765px;top:723.7px">华夏巨匠ZLJ<span class="dd">...</span></div>
<div class="td" style="left:911px;top:723.7px">西安雀维信<span class="dd">...</span></div>
<div class="bdg" style="left:1057px;top:723.2px;width:72px;background:#f01010">运行异常</div>
<svg class="abs" style="left:1177px;top:721.2px;filter:blur(0.6px)" width="52" height="22" viewBox="0 0 52 22"><rect x="0.0" y="0" width="13.5" height="11" fill="rgb(196,196,196)"/><rect x="13.0" y="0" width="13.5" height="11" fill="rgb(236,236,236)"/><rect x="26.0" y="0" width="13.5" height="11" fill="rgb(212,212,212)"/><rect x="39.0" y="0" width="13.5" height="11" fill="rgb(228,228,228)"/><rect x="0.0" y="11" width="13.5" height="11" fill="rgb(228,228,228)"/><rect x="13.0" y="11" width="13.5" height="11" fill="rgb(212,212,212)"/><rect x="26.0" y="11" width="13.5" height="11" fill="rgb(236,236,236)"/><rect x="39.0" y="11" width="13.5" height="11" fill="rgb(196,196,196)"/></svg>
<div class="td lat" style="left:1324px;top:722.2px">17339...</div>
<div class="td" style="left:1432px;top:723.7px">否</div>
<div class="td" style="left:1537px;top:723.7px">机械设</div>
<div class="cb" style="left:260px;top:771.1px"></div>
<div class="td lat" style="left:300px;width:73px;text-align:center;top:769.0px">8</div>
<svg class="abs" style="left:395px;top:766.0px" width="30" height="30" viewBox="0 0 30 30"><rect width="30" height="30" fill="#a8b0c0"/><rect x="0" y="0" width="30" height="8" fill="#8a96b8"/><rect x="10" y="5" width="17" height="21" fill="#e05a20"/><rect x="22" y="0" width="3" height="28" fill="#b04010"/><rect x="1" y="16" width="9" height="10" fill="#2a7a8a"/><rect x="0" y="25" width="30" height="5" fill="#c08060"/><rect x="13" y="9" width="6" height="5" fill="#f07030"/></svg>
<div class="td" style="left:464px;top:770.5px">探矿钻机</div>
<div class="td lk lat" style="left:611px;top:769.0px">BJ0RTMZJ32<span class="dd">...</span></div>
<div class="td" style="left:765px;top:770.5px">华夏巨匠ZLJ<span class="dd">...</span></div>
<div class="td" style="left:911px;top:770.5px">河南工程电<span class="dd">...</span></div>
<div class="bdg" style="left:1057px;top:770.0px;width:72px;background:#ffd60a">过保运行</div>
<svg class="abs" style="left:1177px;top:768.0px;filter:blur(0.6px)" width="55" height="22" viewBox="0 0 55 22"><rect x="0.0" y="0" width="11.5" height="11" fill="rgb(228,228,228)"/><rect x="11.0" y="0" width="11.5" height="11" fill="rgb(220,220,220)"/><rect x="22.0" y="0" width="11.5" height="11" fill="rgb(220,220,220)"/><rect x="33.0" y="0" width="11.5" height="11" fill="rgb(228,228,228)"/><rect x="44.0" y="0" width="11.5" height="11" fill="rgb(236,236,236)"/><rect x="0.0" y="11" width="11.5" height="11" fill="rgb(236,236,236)"/><rect x="11.0" y="11" width="11.5" height="11" fill="rgb(204,204,204)"/><rect x="22.0" y="11" width="11.5" height="11" fill="rgb(220,220,220)"/><rect x="33.0" y="11" width="11.5" height="11" fill="rgb(204,204,204)"/><rect x="44.0" y="11" width="11.5" height="11" fill="rgb(212,212,212)"/></svg>
<div class="td lat" style="left:1324px;top:769.0px">17339...</div>
<div class="td" style="left:1432px;top:770.5px">否</div>
<div class="td" style="left:1537px;top:770.5px">生成制</div>
<div class="cb" style="left:260px;top:818.3px"></div>
<div class="td lat" style="left:300px;width:73px;text-align:center;top:815.8px">9</div>
<svg class="abs" style="left:395px;top:812.8px" width="30" height="30" viewBox="0 0 30 30"><rect width="30" height="30" fill="#3a6a80"/><rect x="0" y="0" width="30" height="6" fill="#5a8090"/><path d="M5 6h20l3 8-2 12H7L3 18z" fill="#c0503a"/><rect x="9" y="9" width="6" height="6" fill="#a03828"/><rect x="16" y="15" width="8" height="6" fill="#d06048"/><rect x="0" y="24" width="30" height="6" fill="#8a9aa8"/></svg>
<div class="td" style="left:464px;top:817.3px">臂架泵</div>
<div class="td lk lat" style="left:611px;top:815.8px">TGOI7AILW<span class="dd">...</span></div>
<div class="td" style="left:765px;top:817.3px">TOST-305</div>
<div class="td" style="left:911px;top:817.3px">河南工程电<span class="dd">...</span></div>
<div class="bdg" style="left:1057px;top:816.8px;width:72px;background:#f01010">运行异常</div>
<svg class="abs" style="left:1177px;top:814.8px;filter:blur(0.6px)" width="37" height="22" viewBox="0 0 37 22"><rect x="0.0" y="0" width="12.8" height="11" fill="rgb(204,204,204)"/><rect x="12.3" y="0" width="12.8" height="11" fill="rgb(196,196,196)"/><rect x="24.7" y="0" width="12.8" height="11" fill="rgb(220,220,220)"/><rect x="0.0" y="11" width="12.8" height="11" fill="rgb(212,212,212)"/><rect x="12.3" y="11" width="12.8" height="11" fill="rgb(196,196,196)"/><rect x="24.7" y="11" width="12.8" height="11" fill="rgb(196,196,196)"/></svg>
<div class="td lat" style="left:1324px;top:815.8px">17392...</div>
<div class="td" style="left:1432px;top:817.3px">否</div>
<div class="td" style="left:1537px;top:817.3px">卫生间</div>
<div class="cb" style="left:260px;top:865.4px"></div>
<div class="td lat" style="left:300px;width:73px;text-align:center;top:862.6px">10</div>
<svg class="abs" style="left:395px;top:862.1px" width="30" height="24" viewBox="0 0 30 24"><rect x="2" y="6" width="27" height="17" fill="#ececec"/><rect x="2" y="2" width="26" height="5" fill="#f4f4f4"/><rect x="0" y="2" width="7" height="3" fill="#222"/><rect x="6" y="6" width="18" height="2" fill="#1a1a1a"/><rect x="18" y="6" width="5" height="1.500" fill="#b22"/><rect x="17" y="0" width="6" height="2" fill="#ddd"/><path d="M6 17h18" stroke="#777" stroke-width="1"/></svg>
<div class="td" style="left:464px;top:864.1px">打印机</div>
<div class="td lk lat" style="left:611px;top:862.6px">733H2KE402<span class="dd">...</span></div>
<div class="td" style="left:765px;top:864.1px">惠普打印机</div>
<div class="td" style="left:911px;top:864.1px">西安雀维信<span class="dd">...</span></div>
<div class="bdg" style="left:1057px;top:863.6px;width:72px;background:#1b6fbf">停机检修</div>
<svg class="abs" style="left:1177px;top:861.6px;filter:blur(0.6px)" width="35" height="22" viewBox="0 0 35 22"><rect x="0.0" y="0" width="12.2" height="11" fill="rgb(212,212,212)"/><rect x="11.7" y="0" width="12.2" height="11" fill="rgb(228,228,228)"/><rect x="23.3" y="0" width="12.2" height="11" fill="rgb(212,212,212)"/><rect x="0.0" y="11" width="12.2" height="11" fill="rgb(220,220,220)"/><rect x="11.7" y="11" width="12.2" height="11" fill="rgb(236,236,236)"/><rect x="23.3" y="11" width="12.2" height="11" fill="rgb(212,212,212)"/></svg>
<div class="td lat" style="left:1324px;top:862.6px">15829...</div>
<div class="td" style="left:1432px;top:864.1px">否</div>
<div class="td" style="left:1537px;top:864.1px">办公设</div>
<div class="abs" style="left:1577px;top:381px;width:12px;height:515px;background:linear-gradient(90deg,rgba(0,0,0,0),rgba(0,0,0,0.05))"></div><div class="abs" style="left:1589px;top:381px;width:284px;height:515px;background:#fff"></div>
<div class="abs" style="left:1589px;top:381px;width:284px;height:47px;background:#f2f2f2"></div>
<div class="abs" style="left:1685px;top:381px;width:1px;height:515px;background:#e6e6e6"></div>
<div class="abs" style="left:1589px;top:474.8px;width:284px;height:1px;background:#e6e6e6"></div>
<div class="abs" style="left:1589px;top:521.6px;width:284px;height:1px;background:#e6e6e6"></div>
<div class="abs" style="left:1589px;top:568.4px;width:284px;height:1px;background:#e6e6e6"></div>
<div class="abs" style="left:1589px;top:615.2px;width:284px;height:1px;background:#e6e6e6"></div>
<div class="abs" style="left:1589px;top:662.0px;width:284px;height:1px;background:#e6e6e6"></div>
<div class="abs" style="left:1589px;top:708.8px;width:284px;height:1px;background:#e6e6e6"></div>
<div class="abs" style="left:1589px;top:755.6px;width:284px;height:1px;background:#e6e6e6"></div>
<div class="abs" style="left:1589px;top:802.4px;width:284px;height:1px;background:#e6e6e6"></div>
<div class="abs" style="left:1589px;top:849.2px;width:284px;height:1px;background:#e6e6e6"></div>
<div class="abs" style="left:1589px;top:896.0px;width:284px;height:1px;background:#e6e6e6"></div>
<div class="abs" style="left:1589px;top:428px;width:284px;height:1px;background:#e6e6e6"></div>
<div class="th" style="left:1589px;width:96px;text-align:center">设备码</div>
<div class="th" style="left:1704px">操作</div>
<svg class="abs" style="left:1624px;top:440px" width="28" height="28" viewBox="0 0 28 28"><rect x="0" y="0" width="27" height="24" fill="#fff"/><rect x="0" y="0" width="1" height="1" fill="#1a1a1a"/><rect x="0" y="1" width="1" height="1" fill="#1a1a1a"/><rect x="0" y="2" width="1" height="1" fill="#1a1a1a"/><rect x="0" y="3" width="1" height="1" fill="#1a1a1a"/><rect x="0" y="4" width="1" height="1" fill="#1a1a1a"/><rect x="0" y="5" width="1" height="1" fill="#1a1a1a"/><rect x="0" y="6" width="1" height="1" fill="#1a1a1a"/><rect x="0" y="7" width="1" height="1" fill="#1a1a1a"/><rect x="0" y="8" width="1" height="1" fill="#1a1a1a"/><rect x="0" y="9" width="1" height="1" fill="#1a1a1a"/><rect x="0" y="10" width="1" height="1" fill="#1a1a1a"/><rect x="0" y="11" width="1" height="1" fill="#1a1a1a"/><rect x="0" y="12" width="1" height="1" fill="#1a1a1a"/><rect x="0" y="14" width="1" height="1" fill="#1a1a1a"/><rect x="0" y="15" width="1" height="1" fill="#1a1a1a"/><rect x="0" y="16" width="1" height="1" fill="#1a1a1a"/><rect x="0" y="18" width="1" height="1" fill="#1a1a1a"/><rect x="0" y="19" width="1" height="1" fill="#1a1a1a"/><rect x="0" y="21" width="1" height="1" fill="#1a1a1a"/><rect x="0" y="23" width="1" height="1" fill="#1a1a1a"/><rect x="1" y="0" width="1" height="1" fill="#1a1a1a"/><rect x="1" y="1" width="1" height="1" fill="#1a1a1a"/><rect x="1" y="2" width="1" height="1" fill="#1a1a1a"/><rect x="1" y="4" width="1" height="1" fill="#1a1a1a"/><rect x="1" y="5" width="1" height="1" fill="#1a1a1a"/><rect x="1" y="6" width="1" height="1" fill="#1a1a1a"/><rect x="1" y="7" width="1" height="1" fill="#1a1a1a"/><rect x="1" y="8" width="1" height="1" fill="#1a1a1a"/><rect x="1" y="9" width="1" height="1" fill="#1a1a1a"/><rect x="1" y="10" width="1" height="1" fill="#1a1a1a"/><rect x="1" y="11" width="1" height="1" fill="#1a1a1a"/><rect x="1" y="12" width="1" height="1" fill="#1a1a1a"/><rect x="1" y="13" width="1" height="1" fill="#1a1a1a"/><rect x="1" y="14" width="1" height="1" fill="#1a1a1a"/><rect x="1" y="15" width="1" height="1" fill="#1a1a1a"/><rect x="1" y="16" width="1" height="1" fill="#1a1a1a"/><rect x="1" y="17" width="1" height="1" fill="#1a1a1a"/><rect x="1" y="19" width="1" height="1" fill="#1a1a1a"/><rect x="1" y="20" width="1" height="1" fill="#1a1a1a"/><rect x="1" y="21" width="1" height="1" fill="#1a1a1a"/><rect x="1" y="22" width="1" height="1" fill="#1a1a1a"/><rect x="2" y="1" width="1" height="1" fill="#1a1a1a"/><rect x="2" y="3" width="1" height="1" fill="#1a1a1a"/><rect x="2" y="4" width="1" height="1" fill="#1a1a1a"/><rect x="2" y="6" width="1" height="1" fill="#1a1a1a"/><rect x="2" y="7" width="1" height="1" fill="#1a1a1a"/><rect x="2" y="8" width="1" height="1" fill="#1a1a1a"/><rect x="2" y="9" width="1" height="1" fill="#1a1a1a"/><rect x="2" y="11" width="1" height="1" fill="#1a1a1a"/><rect x="2" y="13" width="1" height="1" fill="#1a1a1a"/><rect x="2" y="14" width="1" height="1" fill="#1a1a1a"/><rect x="2" y="15" width="1" height="1" fill="#1a1a1a"/><rect x="2" y="16" width="1" height="1" fill="#1a1a1a"/><rect x="2" y="17" width="1" height="1" fill="#1a1a1a"/><rect x="2" y="20" width="1" height="1" fill="#1a1a1a"/><rect x="2" y="21" width="1" height="1" fill="#1a1a1a"/><rect x="2" y="22" width="1" height="1" fill="#1a1a1a"/><rect x="3" y="0" width="1" height="1" fill="#1a1a1a"/><rect x="3" y="22" width="1" height="1" fill="#1a1a1a"/><rect x="3" y="23" width="1" height="1" fill="#1a1a1a"/><rect x="4" y="0" width="1" height="1" fill="#1a1a1a"/><rect x="4" y="1" width="1" height="1" fill="#1a1a1a"/><rect x="4" y="21" width="1" height="1" fill="#1a1a1a"/><rect x="4" y="22" width="1" height="1" fill="#1a1a1a"/><rect x="4" y="23" width="1" height="1" fill="#1a1a1a"/><rect x="5" y="0" width="1" height="1" fill="#1a1a1a"/><rect x="5" y="21" width="1" height="1" fill="#1a1a1a"/><rect x="5" y="22" width="1" height="1" fill="#1a1a1a"/><rect x="5" y="23" width="1" height="1" fill="#1a1a1a"/><rect x="6" y="1" width="1" height="1" fill="#1a1a1a"/><rect x="6" y="21" width="1" height="1" fill="#1a1a1a"/><rect x="6" y="22" width="1" height="1" fill="#1a1a1a"/><rect x="7" y="21" width="1" height="1" fill="#1a1a1a"/><rect x="7" y="22" width="1" height="1" fill="#1a1a1a"/><rect x="7" y="23" width="1" height="1" fill="#1a1a1a"/><rect x="8" y="21" width="1" height="1" fill="#1a1a1a"/><rect x="8" y="22" width="1" height="1" fill="#1a1a1a"/><rect x="8" y="23" width="1" height="1" fill="#1a1a1a"/><rect x="9" y="0" width="1" height="1" fill="#1a1a1a"/><rect x="9" y="1" width="1" height="1" fill="#1a1a1a"/><rect x="9" y="21" width="1" height="1" fill="#1a1a1a"/><rect x="9" y="22" width="1" height="1" fill="#1a1a1a"/><rect x="9" y="23" width="1" height="1" fill="#1a1a1a"/><rect x="10" y="0" width="1" height="1" fill="#1a1a1a"/><rect x="10" y="1" width="1" height="1" fill="#1a1a1a"/><rect x="10" y="21" width="1" height="1" fill="#1a1a1a"/><rect x="10" y="23" width="1" height="1" fill="#1a1a1a"/><rect x="11" y="0" width="1" height="1" fill="#1a1a1a"/><rect x="11" y="1" width="1" height="1" fill="#1a1a1a"/><rect x="11" y="21" width="1" height="1" fill="#1a1a1a"/><rect x="11" y="22" width="1" height="1" fill="#1a1a1a"/><rect x="12" y="22" width="1" height="1" fill="#1a1a1a"/><rect x="12" y="23" width="1" height="1" fill="#1a1a1a"/><rect x="13" y="0" width="1" height="1" fill="#1a1a1a"/><rect x="13" y="1" width="1" height="1" fill="#1a1a1a"/><rect x="13" y="21" width="1" height="1" fill="#1a1a1a"/><rect x="13" y="22" width="1" height="1" fill="#1a1a1a"/><rect x="13" y="23" width="1" height="1" fill="#1a1a1a"/><rect x="14" y="0" width="1" height="1" fill="#1a1a1a"/><rect x="14" y="1" width="1" height="1" fill="#1a1a1a"/><rect x="14" y="21" width="1" height="1" fill="#1a1a1a"/><rect x="14" y="22" width="1" height="1" fill="#1a1a1a"/><rect x="14" y="23" width="1" height="1" fill="#1a1a1a"/><rect x="15" y="0" width="1" height="1" fill="#1a1a1a"/><rect x="15" y="1" width="1" height="1" fill="#1a1a1a"/><rect x="15" y="21" width="1" height="1" fill="#1a1a1a"/><rect x="15" y="23" width="1" height="1" fill="#1a1a1a"/><rect x="16" y="0" width="1" height="1" fill="#1a1a1a"/><rect x="16" y="1" width="1" height="1" fill="#1a1a1a"/><rect x="16" y="21" width="1" height="1" fill="#1a1a1a"/><rect x="16" y="22" width="1" height="1" fill="#1a1a1a"/><rect x="16" y="23" width="1" height="1" fill="#1a1a1a"/><rect x="17" y="21" width="1" height="1" fill="#1a1a1a"/><rect x="17" y="22" width="1" height="1" fill="#1a1a1a"/><rect x="17" y="23" width="1" height="1" fill="#1a1a1a"/><rect x="18" y="0" width="1" height="1" fill="#1a1a1a"/><rect x="18" y="1" width="1" height="1" fill="#1a1a1a"/><rect x="18" y="21" width="1" height="1" fill="#1a1a1a"/><rect x="18" y="23" width="1" height="1" fill="#1a1a1a"/><rect x="19" y="0" width="1" height="1" fill="#1a1a1a"/><rect x="19" y="21" width="1" height="1" fill="#1a1a1a"/><rect x="19" y="22" width="1" height="1" fill="#1a1a1a"/><rect x="19" y="23" width="1" height="1" fill="#1a1a1a"/><rect x="20" y="0" width="1" height="1" fill="#1a1a1a"/><rect x="20" y="1" width="1" height="1" fill="#1a1a1a"/><rect x="20" y="23" width="1" height="1" fill="#1a1a1a"/><rect x="21" y="0" width="1" height="1" fill="#1a1a1a"/><rect x="21" y="1" width="1" height="1" fill="#1a1a1a"/><rect x="21" y="21" width="1" height="1" fill="#1a1a1a"/><rect x="21" y="23" width="1" height="1" fill="#1a1a1a"/><rect x="22" y="1" width="1" height="1" fill="#1a1a1a"/><rect x="22" y="21" width="1" height="1" fill="#1a1a1a"/><rect x="23" y="23" width="1" height="1" fill="#1a1a1a"/><rect x="24" y="0" width="1" height="1" fill="#1a1a1a"/><rect x="24" y="1" width="1" height="1" fill="#1a1a1a"/><rect x="24" y="2" width="1" height="1" fill="#555"/><rect x="24" y="3" width="1" height="1" fill="#555"/><rect x="24" y="13" width="1" height="1" fill="#555"/><rect x="24" y="14" width="1" height="1" fill="#555"/><rect x="24" y="15" width="1" height="1" fill="#555"/><rect x="24" y="16" width="1" height="1" fill="#555"/><rect x="24" y="21" width="1" height="1" fill="#1a1a1a"/><rect x="24" y="23" width="1" height="1" fill="#1a1a1a"/><rect x="25" y="0" width="1" height="1" fill="#1a1a1a"/><rect x="25" y="5" width="1" height="1" fill="#555"/><rect x="25" y="14" width="1" height="1" fill="#555"/><rect x="25" y="15" width="1" height="1" fill="#555"/><rect x="25" y="16" width="1" height="1" fill="#555"/><rect x="25" y="19" width="1" height="1" fill="#555"/><rect x="25" y="22" width="1" height="1" fill="#1a1a1a"/><rect x="25" y="23" width="1" height="1" fill="#1a1a1a"/><rect x="26" y="0" width="1" height="1" fill="#1a1a1a"/><rect x="26" y="1" width="1" height="1" fill="#1a1a1a"/><rect x="26" y="2" width="1" height="1" fill="#555"/><rect x="26" y="10" width="1" height="1" fill="#555"/><rect x="26" y="13" width="1" height="1" fill="#555"/><rect x="26" y="17" width="1" height="1" fill="#555"/><rect x="26" y="21" width="1" height="1" fill="#1a1a1a"/><rect x="26" y="23" width="1" height="1" fill="#1a1a1a"/><rect x="3" y="2" width="5" height="19" fill="#a9adad"/><rect x="8" y="2" width="9" height="19" fill="#7f9595"/><rect x="17" y="2" width="7" height="9" fill="#7c7c7c"/><rect x="17" y="11" width="7" height="10" fill="#8a8a8a"/><rect x="1" y="25" width="2" height="2" fill="#5cb85c"/><rect x="5" y="25.500" width="20" height="1" fill="#d0d0d0"/></svg>
<div class="td ak" style="left:1704px;top:442.9px">修改</div><div class="td ak" style="left:1755px;top:442.9px">详情</div><svg class="abs" style="left:1805px;top:449.4px" width="22" height="5" viewBox="0 0 22 5" fill="#999"><circle cx="2.500" cy="2.500" r="2"/><circle cx="11" cy="2.500" r="2"/><circle cx="19.500" cy="2.500" r="2"/></svg>
<svg class="abs" style="left:1624px;top:487px" width="28" height="28" viewBox="0 0 28 28"><rect x="0" y="0" width="27" height="24" fill="#fff"/><rect x="0" y="0" width="1" height="1" fill="#1a1a1a"/><rect x="0" y="2" width="1" height="1" fill="#1a1a1a"/><rect x="0" y="4" width="1" height="1" fill="#1a1a1a"/><rect x="0" y="5" width="1" height="1" fill="#1a1a1a"/><rect x="0" y="7" width="1" height="1" fill="#1a1a1a"/><rect x="0" y="8" width="1" height="1" fill="#1a1a1a"/><rect x="0" y="9" width="1" height="1" fill="#1a1a1a"/><rect x="0" y="10" width="1" height="1" fill="#1a1a1a"/><rect x="0" y="11" width="1" height="1" fill="#1a1a1a"/><rect x="0" y="12" width="1" height="1" fill="#1a1a1a"/><rect x="0" y="14" width="1" height="1" fill="#1a1a1a"/><rect x="0" y="15" width="1" height="1" fill="#1a1a1a"/><rect x="0" y="16" width="1" height="1" fill="#1a1a1a"/><rect x="0" y="17" width="1" height="1" fill="#1a1a1a"/><rect x="0" y="18" width="1" height="1" fill="#1a1a1a"/><rect x="0" y="20" width="1" height="1" fill="#1a1a1a"/><rect x="0" y="21" width="1" height="1" fill="#1a1a1a"/><rect x="0" y="22" width="1" height="1" fill="#1a1a1a"/><rect x="1" y="0" width="1" height="1" fill="#1a1a1a"/><rect x="1" y="1" width="1" height="1" fill="#1a1a1a"/><rect x="1" y="2" width="1" height="1" fill="#1a1a1a"/><rect x="1" y="3" width="1" height="1" fill="#1a1a1a"/><rect x="1" y="4" width="1" height="1" fill="#1a1a1a"/><rect x="1" y="5" width="1" height="1" fill="#1a1a1a"/><rect x="1" y="6" width="1" height="1" fill="#1a1a1a"/><rect x="1" y="7" width="1" height="1" fill="#1a1a1a"/><rect x="1" y="9" width="1" height="1" fill="#1a1a1a"/><rect x="1" y="10" width="1" height="1" fill="#1a1a1a"/><rect x="1" y="11" width="1" height="1" fill="#1a1a1a"/><rect x="1" y="13" width="1" height="1" fill="#1a1a1a"/><rect x="1" y="14" width="1" height="1" fill="#1a1a1a"/><rect x="1" y="16" width="1" height="1" fill="#1a1a1a"/><rect x="1" y="19" width="1" height="1" fill="#1a1a1a"/><rect x="1" y="20" width="1" height="1" fill="#1a1a1a"/><rect x="1" y="22" width="1" height="1" fill="#1a1a1a"/><rect x="2" y="0" width="1" height="1" fill="#1a1a1a"/><rect x="2" y="1" width="1" height="1" fill="#1a1a1a"/><rect x="2" y="5" width="1" height="1" fill="#1a1a1a"/><rect x="2" y="6" width="1" height="1" fill="#1a1a1a"/><rect x="2" y="7" width="1" height="1" fill="#1a1a1a"/><rect x="2" y="8" width="1" height="1" fill="#1a1a1a"/><rect x="2" y="9" width="1" height="1" fill="#1a1a1a"/><rect x="2" y="10" width="1" height="1" fill="#1a1a1a"/><rect x="2" y="12" width="1" height="1" fill="#1a1a1a"/><rect x="2" y="14" width="1" height="1" fill="#1a1a1a"/><rect x="2" y="15" width="1" height="1" fill="#1a1a1a"/><rect x="2" y="16" width="1" height="1" fill="#1a1a1a"/><rect x="2" y="17" width="1" height="1" fill="#1a1a1a"/><rect x="2" y="18" width="1" height="1" fill="#1a1a1a"/><rect x="2" y="19" width="1" height="1" fill="#1a1a1a"/><rect x="2" y="20" width="1" height="1" fill="#1a1a1a"/><rect x="2" y="23" width="1" height="1" fill="#1a1a1a"/><rect x="3" y="0" width="1" height="1" fill="#1a1a1a"/><rect x="3" y="1" width="1" height="1" fill="#1a1a1a"/><rect x="3" y="21" width="1" height="1" fill="#1a1a1a"/><rect x="3" y="23" width="1" height="1" fill="#1a1a1a"/><rect x="4" y="1" width="1" height="1" fill="#1a1a1a"/><rect x="4" y="21" width="1" height="1" fill="#1a1a1a"/><rect x="4" y="23" width="1" height="1" fill="#1a1a1a"/><rect x="5" y="0" width="1" height="1" fill="#1a1a1a"/><rect x="5" y="1" width="1" height="1" fill="#1a1a1a"/><rect x="5" y="21" width="1" height="1" fill="#1a1a1a"/><rect x="5" y="22" width="1" height="1" fill="#1a1a1a"/><rect x="5" y="23" width="1" height="1" fill="#1a1a1a"/><rect x="6" y="0" width="1" height="1" fill="#1a1a1a"/><rect x="6" y="1" width="1" height="1" fill="#1a1a1a"/><rect x="6" y="21" width="1" height="1" fill="#1a1a1a"/><rect x="6" y="22" width="1" height="1" fill="#1a1a1a"/><rect x="6" y="23" width="1" height="1" fill="#1a1a1a"/><rect x="7" y="0" width="1" height="1" fill="#1a1a1a"/><rect x="7" y="1" width="1" height="1" fill="#1a1a1a"/><rect x="7" y="21" width="1" height="1" fill="#1a1a1a"/><rect x="7" y="23" width="1" height="1" fill="#1a1a1a"/><rect x="8" y="21" width="1" height="1" fill="#1a1a1a"/><rect x="8" y="22" width="1" height="1" fill="#1a1a1a"/><rect x="8" y="23" width="1" height="1" fill="#1a1a1a"/><rect x="9" y="0" width="1" height="1" fill="#1a1a1a"/><rect x="9" y="1" width="1" height="1" fill="#1a1a1a"/><rect x="9" y="22" width="1" height="1" fill="#1a1a1a"/><rect x="10" y="0" width="1" height="1" fill="#1a1a1a"/><rect x="10" y="21" width="1" height="1" fill="#1a1a1a"/><rect x="10" y="23" width="1" height="1" fill="#1a1a1a"/><rect x="11" y="22" width="1" height="1" fill="#1a1a1a"/><rect x="11" y="23" width="1" height="1" fill="#1a1a1a"/><rect x="12" y="1" width="1" height="1" fill="#1a1a1a"/><rect x="12" y="21" width="1" height="1" fill="#1a1a1a"/><rect x="12" y="22" width="1" height="1" fill="#1a1a1a"/><rect x="12" y="23" width="1" height="1" fill="#1a1a1a"/><rect x="13" y="0" width="1" height="1" fill="#1a1a1a"/><rect x="13" y="1" width="1" height="1" fill="#1a1a1a"/><rect x="13" y="21" width="1" height="1" fill="#1a1a1a"/><rect x="13" y="22" width="1" height="1" fill="#1a1a1a"/><rect x="13" y="23" width="1" height="1" fill="#1a1a1a"/><rect x="14" y="0" width="1" height="1" fill="#1a1a1a"/><rect x="14" y="1" width="1" height="1" fill="#1a1a1a"/><rect x="14" y="23" width="1" height="1" fill="#1a1a1a"/><rect x="15" y="0" width="1" height="1" fill="#1a1a1a"/><rect x="15" y="1" width="1" height="1" fill="#1a1a1a"/><rect x="15" y="21" width="1" height="1" fill="#1a1a1a"/><rect x="15" y="22" width="1" height="1" fill="#1a1a1a"/><rect x="15" y="23" width="1" height="1" fill="#1a1a1a"/><rect x="16" y="0" width="1" height="1" fill="#1a1a1a"/><rect x="16" y="22" width="1" height="1" fill="#1a1a1a"/><rect x="16" y="23" width="1" height="1" fill="#1a1a1a"/><rect x="17" y="0" width="1" height="1" fill="#1a1a1a"/><rect x="17" y="1" width="1" height="1" fill="#1a1a1a"/><rect x="17" y="21" width="1" height="1" fill="#1a1a1a"/><rect x="18" y="0" width="1" height="1" fill="#1a1a1a"/><rect x="18" y="21" width="1" height="1" fill="#1a1a1a"/><rect x="18" y="22" width="1" height="1" fill="#1a1a1a"/><rect x="18" y="23" width="1" height="1" fill="#1a1a1a"/><rect x="19" y="1" width="1" height="1" fill="#1a1a1a"/><rect x="19" y="21" width="1" height="1" fill="#1a1a1a"/><rect x="19" y="22" width="1" height="1" fill="#1a1a1a"/><rect x="20" y="22" width="1" height="1" fill="#1a1a1a"/><rect x="20" y="23" width="1" height="1" fill="#1a1a1a"/><rect x="21" y="0" width="1" height="1" fill="#1a1a1a"/><rect x="21" y="21" width="1" height="1" fill="#1a1a1a"/><rect x="22" y="0" width="1" height="1" fill="#1a1a1a"/><rect x="22" y="1" width="1" height="1" fill="#1a1a1a"/><rect x="22" y="23" width="1" height="1" fill="#1a1a1a"/><rect x="23" y="1" width="1" height="1" fill="#1a1a1a"/><rect x="23" y="21" width="1" height="1" fill="#1a1a1a"/><rect x="24" y="0" width="1" height="1" fill="#1a1a1a"/><rect x="24" y="1" width="1" height="1" fill="#1a1a1a"/><rect x="24" y="15" width="1" height="1" fill="#555"/><rect x="24" y="19" width="1" height="1" fill="#555"/><rect x="24" y="21" width="1" height="1" fill="#1a1a1a"/><rect x="24" y="22" width="1" height="1" fill="#1a1a1a"/><rect x="25" y="0" width="1" height="1" fill="#1a1a1a"/><rect x="25" y="1" width="1" height="1" fill="#1a1a1a"/><rect x="25" y="8" width="1" height="1" fill="#555"/><rect x="25" y="21" width="1" height="1" fill="#1a1a1a"/><rect x="25" y="22" width="1" height="1" fill="#1a1a1a"/><rect x="25" y="23" width="1" height="1" fill="#1a1a1a"/><rect x="26" y="0" width="1" height="1" fill="#1a1a1a"/><rect x="26" y="1" width="1" height="1" fill="#1a1a1a"/><rect x="26" y="5" width="1" height="1" fill="#555"/><rect x="26" y="10" width="1" height="1" fill="#555"/><rect x="26" y="21" width="1" height="1" fill="#1a1a1a"/><rect x="26" y="22" width="1" height="1" fill="#1a1a1a"/><rect x="26" y="23" width="1" height="1" fill="#1a1a1a"/><rect x="3" y="2" width="5" height="19" fill="#a9adad"/><rect x="8" y="2" width="9" height="19" fill="#7f9595"/><rect x="17" y="2" width="7" height="9" fill="#7c7c7c"/><rect x="17" y="11" width="7" height="10" fill="#8a8a8a"/><rect x="1" y="25" width="2" height="2" fill="#5cb85c"/><rect x="5" y="25.500" width="20" height="1" fill="#d0d0d0"/></svg>
<div class="td ak" style="left:1704px;top:489.7px">详情</div><div class="td ak" style="left:1755px;top:489.7px">删除</div><div class="td ak" style="left:1806px;top:489.7px">调拨</div>
<svg class="abs" style="left:1624px;top:534px" width="28" height="28" viewBox="0 0 28 28"><rect x="0" y="0" width="27" height="24" fill="#fff"/><rect x="0" y="0" width="1" height="1" fill="#1a1a1a"/><rect x="0" y="1" width="1" height="1" fill="#1a1a1a"/><rect x="0" y="2" width="1" height="1" fill="#1a1a1a"/><rect x="0" y="4" width="1" height="1" fill="#1a1a1a"/><rect x="0" y="5" width="1" height="1" fill="#1a1a1a"/><rect x="0" y="7" width="1" height="1" fill="#1a1a1a"/><rect x="0" y="8" width="1" height="1" fill="#1a1a1a"/><rect x="0" y="9" width="1" height="1" fill="#1a1a1a"/><rect x="0" y="10" width="1" height="1" fill="#1a1a1a"/><rect x="0" y="11" width="1" height="1" fill="#1a1a1a"/><rect x="0" y="13" width="1" height="1" fill="#1a1a1a"/><rect x="0" y="15" width="1" height="1" fill="#1a1a1a"/><rect x="0" y="16" width="1" height="1" fill="#1a1a1a"/><rect x="0" y="17" width="1" height="1" fill="#1a1a1a"/><rect x="0" y="18" width="1" height="1" fill="#1a1a1a"/><rect x="0" y="20" width="1" height="1" fill="#1a1a1a"/><rect x="0" y="22" width="1" height="1" fill="#1a1a1a"/><rect x="1" y="0" width="1" height="1" fill="#1a1a1a"/><rect x="1" y="1" width="1" height="1" fill="#1a1a1a"/><rect x="1" y="2" width="1" height="1" fill="#1a1a1a"/><rect x="1" y="4" width="1" height="1" fill="#1a1a1a"/><rect x="1" y="5" width="1" height="1" fill="#1a1a1a"/><rect x="1" y="6" width="1" height="1" fill="#1a1a1a"/><rect x="1" y="7" width="1" height="1" fill="#1a1a1a"/><rect x="1" y="8" width="1" height="1" fill="#1a1a1a"/><rect x="1" y="10" width="1" height="1" fill="#1a1a1a"/><rect x="1" y="13" width="1" height="1" fill="#1a1a1a"/><rect x="1" y="14" width="1" height="1" fill="#1a1a1a"/><rect x="1" y="15" width="1" height="1" fill="#1a1a1a"/><rect x="1" y="16" width="1" height="1" fill="#1a1a1a"/><rect x="1" y="17" width="1" height="1" fill="#1a1a1a"/><rect x="1" y="19" width="1" height="1" fill="#1a1a1a"/><rect x="1" y="20" width="1" height="1" fill="#1a1a1a"/><rect x="1" y="21" width="1" height="1" fill="#1a1a1a"/><rect x="1" y="22" width="1" height="1" fill="#1a1a1a"/><rect x="2" y="0" width="1" height="1" fill="#1a1a1a"/><rect x="2" y="1" width="1" height="1" fill="#1a1a1a"/><rect x="2" y="2" width="1" height="1" fill="#1a1a1a"/><rect x="2" y="3" width="1" height="1" fill="#1a1a1a"/><rect x="2" y="4" width="1" height="1" fill="#1a1a1a"/><rect x="2" y="5" width="1" height="1" fill="#1a1a1a"/><rect x="2" y="6" width="1" height="1" fill="#1a1a1a"/><rect x="2" y="8" width="1" height="1" fill="#1a1a1a"/><rect x="2" y="9" width="1" height="1" fill="#1a1a1a"/><rect x="2" y="10" width="1" height="1" fill="#1a1a1a"/><rect x="2" y="11" width="1" height="1" fill="#1a1a1a"/><rect x="2" y="12" width="1" height="1" fill="#1a1a1a"/><rect x="2" y="13" width="1" height="1" fill="#1a1a1a"/><rect x="2" y="14" width="1" height="1" fill="#1a1a1a"/><rect x="2" y="16" width="1" height="1" fill="#1a1a1a"/><rect x="2" y="17" width="1" height="1" fill="#1a1a1a"/><rect x="2" y="18" width="1" height="1" fill="#1a1a1a"/><rect x="2" y="19" width="1" height="1" fill="#1a1a1a"/><rect x="2" y="20" width="1" height="1" fill="#1a1a1a"/><rect x="2" y="23" width="1" height="1" fill="#1a1a1a"/><rect x="3" y="21" width="1" height="1" fill="#1a1a1a"/><rect x="3" y="22" width="1" height="1" fill="#1a1a1a"/><rect x="3" y="23" width="1" height="1" fill="#1a1a1a"/><rect x="4" y="0" width="1" height="1" fill="#1a1a1a"/><rect x="4" y="1" width="1" height="1" fill="#1a1a1a"/><rect x="4" y="21" width="1" height="1" fill="#1a1a1a"/><rect x="4" y="23" width="1" height="1" fill="#1a1a1a"/><rect x="5" y="0" width="1" height="1" fill="#1a1a1a"/><rect x="5" y="21" width="1" height="1" fill="#1a1a1a"/><rect x="5" y="22" width="1" height="1" fill="#1a1a1a"/><rect x="5" y="23" width="1" height="1" fill="#1a1a1a"/><rect x="6" y="1" width="1" height="1" fill="#1a1a1a"/><rect x="6" y="21" width="1" height="1" fill="#1a1a1a"/><rect x="6" y="23" width="1" height="1" fill="#1a1a1a"/><rect x="7" y="0" width="1" height="1" fill="#1a1a1a"/><rect x="7" y="1" width="1" height="1" fill="#1a1a1a"/><rect x="7" y="21" width="1" height="1" fill="#1a1a1a"/><rect x="7" y="22" width="1" height="1" fill="#1a1a1a"/><rect x="7" y="23" width="1" height="1" fill="#1a1a1a"/><rect x="8" y="0" width="1" height="1" fill="#1a1a1a"/><rect x="8" y="1" width="1" height="1" fill="#1a1a1a"/><rect x="8" y="22" width="1" height="1" fill="#1a1a1a"/><rect x="9" y="1" width="1" height="1" fill="#1a1a1a"/><rect x="9" y="22" width="1" height="1" fill="#1a1a1a"/><rect x="10" y="0" width="1" height="1" fill="#1a1a1a"/><rect x="10" y="1" width="1" height="1" fill="#1a1a1a"/><rect x="10" y="22" width="1" height="1" fill="#1a1a1a"/><rect x="10" y="23" width="1" height="1" fill="#1a1a1a"/><rect x="11" y="1" width="1" height="1" fill="#1a1a1a"/><rect x="11" y="21" width="1" height="1" fill="#1a1a1a"/><rect x="11" y="22" width="1" height="1" fill="#1a1a1a"/><rect x="12" y="0" width="1" height="1" fill="#1a1a1a"/><rect x="12" y="1" width="1" height="1" fill="#1a1a1a"/><rect x="12" y="22" width="1" height="1" fill="#1a1a1a"/><rect x="13" y="1" width="1" height="1" fill="#1a1a1a"/><rect x="13" y="21" width="1" height="1" fill="#1a1a1a"/><rect x="13" y="22" width="1" height="1" fill="#1a1a1a"/><rect x="13" y="23" width="1" height="1" fill="#1a1a1a"/><rect x="14" y="0" width="1" height="1" fill="#1a1a1a"/><rect x="14" y="1" width="1" height="1" fill="#1a1a1a"/><rect x="14" y="22" width="1" height="1" fill="#1a1a1a"/><rect x="14" y="23" width="1" height="1" fill="#1a1a1a"/><rect x="15" y="0" width="1" height="1" fill="#1a1a1a"/><rect x="15" y="1" width="1" height="1" fill="#1a1a1a"/><rect x="15" y="21" width="1" height="1" fill="#1a1a1a"/><rect x="15" y="22" width="1" height="1" fill="#1a1a1a"/><rect x="15" y="23" width="1" height="1" fill="#1a1a1a"/><rect x="16" y="0" width="1" height="1" fill="#1a1a1a"/><rect x="16" y="1" width="1" height="1" fill="#1a1a1a"/><rect x="16" y="23" width="1" height="1" fill="#1a1a1a"/><rect x="17" y="1" width="1" height="1" fill="#1a1a1a"/><rect x="18" y="0" width="1" height="1" fill="#1a1a1a"/><rect x="18" y="1" width="1" height="1" fill="#1a1a1a"/><rect x="18" y="21" width="1" height="1" fill="#1a1a1a"/><rect x="18" y="22" width="1" height="1" fill="#1a1a1a"/><rect x="18" y="23" width="1" height="1" fill="#1a1a1a"/><rect x="19" y="0" width="1" height="1" fill="#1a1a1a"/><rect x="19" y="1" width="1" height="1" fill="#1a1a1a"/><rect x="19" y="22" width="1" height="1" fill="#1a1a1a"/><rect x="19" y="23" width="1" height="1" fill="#1a1a1a"/><rect x="20" y="0" width="1" height="1" fill="#1a1a1a"/><rect x="20" y="1" width="1" height="1" fill="#1a1a1a"/><rect x="20" y="21" width="1" height="1" fill="#1a1a1a"/><rect x="20" y="22" width="1" height="1" fill="#1a1a1a"/><rect x="20" y="23" width="1" height="1" fill="#1a1a1a"/><rect x="21" y="0" width="1" height="1" fill="#1a1a1a"/><rect x="21" y="21" width="1" height="1" fill="#1a1a1a"/><rect x="21" y="23" width="1" height="1" fill="#1a1a1a"/><rect x="22" y="21" width="1" height="1" fill="#1a1a1a"/><rect x="22" y="22" width="1" height="1" fill="#1a1a1a"/><rect x="22" y="23" width="1" height="1" fill="#1a1a1a"/><rect x="23" y="1" width="1" height="1" fill="#1a1a1a"/><rect x="23" y="21" width="1" height="1" fill="#1a1a1a"/><rect x="23" y="22" width="1" height="1" fill="#1a1a1a"/><rect x="23" y="23" width="1" height="1" fill="#1a1a1a"/><rect x="24" y="2" width="1" height="1" fill="#555"/><rect x="24" y="7" width="1" height="1" fill="#555"/><rect x="24" y="11" width="1" height="1" fill="#555"/><rect x="24" y="16" width="1" height="1" fill="#555"/><rect x="24" y="21" width="1" height="1" fill="#1a1a1a"/><rect x="24" y="22" width="1" height="1" fill="#1a1a1a"/><rect x="24" y="23" width="1" height="1" fill="#1a1a1a"/><rect x="25" y="0" width="1" height="1" fill="#1a1a1a"/><rect x="25" y="1" width="1" height="1" fill="#1a1a1a"/><rect x="25" y="5" width="1" height="1" fill="#555"/><rect x="25" y="9" width="1" height="1" fill="#555"/><rect x="25" y="15" width="1" height="1" fill="#555"/><rect x="25" y="17" width="1" height="1" fill="#555"/><rect x="25" y="19" width="1" height="1" fill="#555"/><rect x="25" y="20" width="1" height="1" fill="#555"/><rect x="25" y="21" width="1" height="1" fill="#1a1a1a"/><rect x="25" y="22" width="1" height="1" fill="#1a1a1a"/><rect x="26" y="1" width="1" height="1" fill="#1a1a1a"/><rect x="26" y="7" width="1" height="1" fill="#555"/><rect x="26" y="10" width="1" height="1" fill="#555"/><rect x="26" y="13" width="1" height="1" fill="#555"/><rect x="26" y="14" width="1" height="1" fill="#555"/><rect x="26" y="16" width="1" height="1" fill="#555"/><rect x="26" y="20" width="1" height="1" fill="#555"/><rect x="26" y="21" width="1" height="1" fill="#1a1a1a"/><rect x="26" y="22" width="1" height="1" fill="#1a1a1a"/><rect x="26" y="23" width="1" height="1" fill="#1a1a1a"/><rect x="3" y="2" width="5" height="19" fill="#a9adad"/><rect x="8" y="2" width="9" height="19" fill="#7f9595"/><rect x="17" y="2" width="7" height="9" fill="#7c7c7c"/><rect x="17" y="11" width="7" height="10" fill="#8a8a8a"/><rect x="1" y="25" width="2" height="2" fill="#5cb85c"/><rect x="5" y="25.500" width="20" height="1" fill="#d0d0d0"/></svg>
<div class="td ak" style="left:1704px;top:536.5px">修改</div><div class="td ak" style="left:1755px;top:536.5px">详情</div><svg class="abs" style="left:1805px;top:543.0px" width="22" height="5" viewBox="0 0 22 5" fill="#999"><circle cx="2.500" cy="2.500" r="2"/><circle cx="11" cy="2.500" r="2"/><circle cx="19.500" cy="2.500" r="2"/></svg>
<svg class="abs" style="left:1624px;top:580px" width="28" height="28" viewBox="0 0 28 28"><rect x="0" y="0" width="27" height="24" fill="#fff"/><rect x="0" y="0" width="1" height="1" fill="#1a1a1a"/><rect x="0" y="1" width="1" height="1" fill="#1a1a1a"/><rect x="0" y="2" width="1" height="1" fill="#1a1a1a"/><rect x="0" y="3" width="1" height="1" fill="#1a1a1a"/><rect x="0" y="6" width="1" height="1" fill="#1a1a1a"/><rect x="0" y="7" width="1" height="1" fill="#1a1a1a"/><rect x="0" y="8" width="1" height="1" fill="#1a1a1a"/><rect x="0" y="9" width="1" height="1" fill="#1a1a1a"/><rect x="0" y="10" width="1" height="1" fill="#1a1a1a"/><rect x="0" y="13" width="1" height="1" fill="#1a1a1a"/><rect x="0" y="15" width="1" height="1" fill="#1a1a1a"/><rect x="0" y="16" width="1" height="1" fill="#1a1a1a"/><rect x="0" y="17" width="1" height="1" fill="#1a1a1a"/><rect x="0" y="18" width="1" height="1" fill="#1a1a1a"/><rect x="0" y="19" width="1" height="1" fill="#1a1a1a"/><rect x="0" y="20" width="1" height="1" fill="#1a1a1a"/><rect x="0" y="21" width="1" height="1" fill="#1a1a1a"/><rect x="0" y="22" width="1" height="1" fill="#1a1a1a"/><rect x="1" y="2" width="1" height="1" fill="#1a1a1a"/><rect x="1" y="3" width="1" height="1" fill="#1a1a1a"/><rect x="1" y="4" width="1" height="1" fill="#1a1a1a"/><rect x="1" y="5" width="1" height="1" fill="#1a1a1a"/><rect x="1" y="7" width="1" height="1" fill="#1a1a1a"/><rect x="1" y="8" width="1" height="1" fill="#1a1a1a"/><rect x="1" y="10" width="1" height="1" fill="#1a1a1a"/><rect x="1" y="11" width="1" height="1" fill="#1a1a1a"/><rect x="1" y="12" width="1" height="1" fill="#1a1a1a"/><rect x="1" y="13" width="1" height="1" fill="#1a1a1a"/><rect x="1" y="14" width="1" height="1" fill="#1a1a1a"/><rect x="1" y="16" width="1" height="1" fill="#1a1a1a"/><rect x="1" y="17" width="1" height="1" fill="#1a1a1a"/><rect x="1" y="18" width="1" height="1" fill="#1a1a1a"/><rect x="1" y="19" width="1" height="1" fill="#1a1a1a"/><rect x="1" y="20" width="1" height="1" fill="#1a1a1a"/><rect x="1" y="22" width="1" height="1" fill="#1a1a1a"/><rect x="1" y="23" width="1" height="1" fill="#1a1a1a"/><rect x="2" y="1" width="1" height="1" fill="#1a1a1a"/><rect x="2" y="2" width="1" height="1" fill="#1a1a1a"/><rect x="2" y="3" width="1" height="1" fill="#1a1a1a"/><rect x="2" y="4" width="1" height="1" fill="#1a1a1a"/><rect x="2" y="5" width="1" height="1" fill="#1a1a1a"/><rect x="2" y="7" width="1" height="1" fill="#1a1a1a"/><rect x="2" y="8" width="1" height="1" fill="#1a1a1a"/><rect x="2" y="11" width="1" height="1" fill="#1a1a1a"/><rect x="2" y="12" width="1" height="1" fill="#1a1a1a"/><rect x="2" y="13" width="1" height="1" fill="#1a1a1a"/><rect x="2" y="14" width="1" height="1" fill="#1a1a1a"/><rect x="2" y="15" width="1" height="1" fill="#1a1a1a"/><rect x="2" y="16" width="1" height="1" fill="#1a1a1a"/><rect x="2" y="17" width="1" height="1" fill="#1a1a1a"/><rect x="2" y="18" width="1" height="1" fill="#1a1a1a"/><rect x="2" y="19" width="1" height="1" fill="#1a1a1a"/><rect x="2" y="20" width="1" height="1" fill="#1a1a1a"/><rect x="2" y="23" width="1" height="1" fill="#1a1a1a"/><rect x="3" y="0" width="1" height="1" fill="#1a1a1a"/><rect x="3" y="1" width="1" height="1" fill="#1a1a1a"/><rect x="3" y="21" width="1" height="1" fill="#1a1a1a"/><rect x="3" y="23" width="1" height="1" fill="#1a1a1a"/><rect x="4" y="0" width="1" height="1" fill="#1a1a1a"/><rect x="4" y="1" width="1" height="1" fill="#1a1a1a"/><rect x="4" y="21" width="1" height="1" fill="#1a1a1a"/><rect x="4" y="22" width="1" height="1" fill="#1a1a1a"/><rect x="4" y="23" width="1" height="1" fill="#1a1a1a"/><rect x="5" y="1" width="1" height="1" fill="#1a1a1a"/><rect x="5" y="21" width="1" height="1" fill="#1a1a1a"/><rect x="5" y="22" width="1" height="1" fill="#1a1a1a"/><rect x="6" y="0" width="1" height="1" fill="#1a1a1a"/><rect x="6" y="1" width="1" height="1" fill="#1a1a1a"/><rect x="6" y="21" width="1" height="1" fill="#1a1a1a"/><rect x="6" y="22" width="1" height="1" fill="#1a1a1a"/><rect x="6" y="23" width="1" height="1" fill="#1a1a1a"/><rect x="7" y="0" width="1" height="1" fill="#1a1a1a"/><rect x="7" y="1" width="1" height="1" fill="#1a1a1a"/><rect x="7" y="21" width="1" height="1" fill="#1a1a1a"/><rect x="7" y="22" width="1" height="1" fill="#1a1a1a"/><rect x="7" y="23" width="1" height="1" fill="#1a1a1a"/><rect x="8" y="0" width="1" height="1" fill="#1a1a1a"/><rect x="8" y="1" width="1" height="1" fill="#1a1a1a"/><rect x="8" y="22" width="1" height="1" fill="#1a1a1a"/><rect x="8" y="23" width="1" height="1" fill="#1a1a1a"/><rect x="9" y="0" width="1" height="1" fill="#1a1a1a"/><rect x="9" y="1" width="1" height="1" fill="#1a1a1a"/><rect x="9" y="21" width="1" height="1" fill="#1a1a1a"/><rect x="9" y="22" width="1" height="1" fill="#1a1a1a"/><rect x="9" y="23" width="1" height="1" fill="#1a1a1a"/><rect x="10" y="0" width="1" height="1" fill="#1a1a1a"/><rect x="10" y="21" width="1" height="1" fill="#1a1a1a"/><rect x="10" y="22" width="1" height="1" fill="#1a1a1a"/><rect x="10" y="23" width="1" height="1" fill="#1a1a1a"/><rect x="11" y="0" width="1" height="1" fill="#1a1a1a"/><rect x="11" y="1" width="1" height="1" fill="#1a1a1a"/><rect x="11" y="23" width="1" height="1" fill="#1a1a1a"/><rect x="12" y="0" width="1" height="1" fill="#1a1a1a"/><rect x="12" y="1" width="1" height="1" fill="#1a1a1a"/><rect x="12" y="22" width="1" height="1" fill="#1a1a1a"/><rect x="12" y="23" width="1" height="1" fill="#1a1a1a"/><rect x="13" y="0" width="1" height="1" fill="#1a1a1a"/><rect x="13" y="1" width="1" height="1" fill="#1a1a1a"/><rect x="13" y="21" width="1" height="1" fill="#1a1a1a"/><rect x="13" y="22" width="1" height="1" fill="#1a1a1a"/><rect x="14" y="0" width="1" height="1" fill="#1a1a1a"/><rect x="14" y="22" width="1" height="1" fill="#1a1a1a"/><rect x="15" y="21" width="1" height="1" fill="#1a1a1a"/><rect x="16" y="21" width="1" height="1" fill="#1a1a1a"/><rect x="16" y="22" width="1" height="1" fill="#1a1a1a"/><rect x="16" y="23" width="1" height="1" fill="#1a1a1a"/><rect x="17" y="0" width="1" height="1" fill="#1a1a1a"/><rect x="17" y="21" width="1" height="1" fill="#1a1a1a"/><rect x="17" y="22" width="1" height="1" fill="#1a1a1a"/><rect x="17" y="23" width="1" height="1" fill="#1a1a1a"/><rect x="18" y="0" width="1" height="1" fill="#1a1a1a"/><rect x="18" y="1" width="1" height="1" fill="#1a1a1a"/><rect x="18" y="21" width="1" height="1" fill="#1a1a1a"/><rect x="19" y="0" width="1" height="1" fill="#1a1a1a"/><rect x="19" y="21" width="1" height="1" fill="#1a1a1a"/><rect x="19" y="22" width="1" height="1" fill="#1a1a1a"/><rect x="19" y="23" width="1" height="1" fill="#1a1a1a"/><rect x="20" y="0" width="1" height="1" fill="#1a1a1a"/><rect x="20" y="1" width="1" height="1" fill="#1a1a1a"/><rect x="20" y="21" width="1" height="1" fill="#1a1a1a"/><rect x="20" y="22" width="1" height="1" fill="#1a1a1a"/><rect x="20" y="23" width="1" height="1" fill="#1a1a1a"/><rect x="21" y="0" width="1" height="1" fill="#1a1a1a"/><rect x="21" y="1" width="1" height="1" fill="#1a1a1a"/><rect x="21" y="21" width="1" height="1" fill="#1a1a1a"/><rect x="22" y="0" width="1" height="1" fill="#1a1a1a"/><rect x="22" y="1" width="1" height="1" fill="#1a1a1a"/><rect x="22" y="21" width="1" height="1" fill="#1a1a1a"/><rect x="22" y="22" width="1" height="1" fill="#1a1a1a"/><rect x="22" y="23" width="1" height="1" fill="#1a1a1a"/><rect x="23" y="0" width="1" height="1" fill="#1a1a1a"/><rect x="23" y="1" width="1" height="1" fill="#1a1a1a"/><rect x="23" y="22" width="1" height="1" fill="#1a1a1a"/><rect x="23" y="23" width="1" height="1" fill="#1a1a1a"/><rect x="24" y="0" width="1" height="1" fill="#1a1a1a"/><rect x="24" y="1" width="1" height="1" fill="#1a1a1a"/><rect x="24" y="19" width="1" height="1" fill="#555"/><rect x="24" y="22" width="1" height="1" fill="#1a1a1a"/><rect x="24" y="23" width="1" height="1" fill="#1a1a1a"/><rect x="25" y="0" width="1" height="1" fill="#1a1a1a"/><rect x="25" y="4" width="1" height="1" fill="#555"/><rect x="25" y="5" width="1" height="1" fill="#555"/><rect x="25" y="6" width="1" height="1" fill="#555"/><rect x="25" y="9" width="1" height="1" fill="#555"/><rect x="25" y="12" width="1" height="1" fill="#555"/><rect x="25" y="17" width="1" height="1" fill="#555"/><rect x="25" y="18" width="1" height="1" fill="#555"/><rect x="25" y="21" width="1" height="1" fill="#1a1a1a"/><rect x="26" y="1" width="1" height="1" fill="#1a1a1a"/><rect x="26" y="2" width="1" height="1" fill="#555"/><rect x="26" y="4" width="1" height="1" fill="#555"/><rect x="26" y="9" width="1" height="1" fill="#555"/><rect x="26" y="10" width="1" height="1" fill="#555"/><rect x="26" y="14" width="1" height="1" fill="#555"/><rect x="26" y="21" width="1" height="1" fill="#1a1a1a"/><rect x="3" y="2" width="5" height="19" fill="#a9adad"/><rect x="8" y="2" width="9" height="19" fill="#7f9595"/><rect x="17" y="2" width="7" height="9" fill="#7c7c7c"/><rect x="17" y="11" width="7" height="10" fill="#8a8a8a"/><rect x="1" y="25" width="2" height="2" fill="#5cb85c"/><rect x="5" y="25.500" width="20" height="1" fill="#d0d0d0"/></svg>
<div class="td ak" style="left:1704px;top:583.3px">修改</div><div class="td ak" style="left:1755px;top:583.3px">详情</div><svg class="abs" style="left:1805px;top:589.8px" width="22" height="5" viewBox="0 0 22 5" fill="#999"><circle cx="2.500" cy="2.500" r="2"/><circle cx="11" cy="2.500" r="2"/><circle cx="19.500" cy="2.500" r="2"/></svg>
<svg class="abs" style="left:1624px;top:627px" width="28" height="28" viewBox="0 0 28 28"><rect x="0" y="0" width="27" height="24" fill="#fff"/><rect x="0" y="0" width="1" height="1" fill="#1a1a1a"/><rect x="0" y="1" width="1" height="1" fill="#1a1a1a"/><rect x="0" y="3" width="1" height="1" fill="#1a1a1a"/><rect x="0" y="4" width="1" height="1" fill="#1a1a1a"/><rect x="0" y="5" width="1" height="1" fill="#1a1a1a"/><rect x="0" y="6" width="1" height="1" fill="#1a1a1a"/><rect x="0" y="7" width="1" height="1" fill="#1a1a1a"/><rect x="0" y="8" width="1" height="1" fill="#1a1a1a"/><rect x="0" y="10" width="1" height="1" fill="#1a1a1a"/><rect x="0" y="11" width="1" height="1" fill="#1a1a1a"/><rect x="0" y="12" width="1" height="1" fill="#1a1a1a"/><rect x="0" y="14" width="1" height="1" fill="#1a1a1a"/><rect x="0" y="15" width="1" height="1" fill="#1a1a1a"/><rect x="0" y="18" width="1" height="1" fill="#1a1a1a"/><rect x="0" y="19" width="1" height="1" fill="#1a1a1a"/><rect x="0" y="20" width="1" height="1" fill="#1a1a1a"/><rect x="0" y="21" width="1" height="1" fill="#1a1a1a"/><rect x="0" y="22" width="1" height="1" fill="#1a1a1a"/><rect x="0" y="23" width="1" height="1" fill="#1a1a1a"/><rect x="1" y="0" width="1" height="1" fill="#1a1a1a"/><rect x="1" y="1" width="1" height="1" fill="#1a1a1a"/><rect x="1" y="2" width="1" height="1" fill="#1a1a1a"/><rect x="1" y="3" width="1" height="1" fill="#1a1a1a"/><rect x="1" y="4" width="1" height="1" fill="#1a1a1a"/><rect x="1" y="6" width="1" height="1" fill="#1a1a1a"/><rect x="1" y="7" width="1" height="1" fill="#1a1a1a"/><rect x="1" y="8" width="1" height="1" fill="#1a1a1a"/><rect x="1" y="9" width="1" height="1" fill="#1a1a1a"/><rect x="1" y="10" width="1" height="1" fill="#1a1a1a"/><rect x="1" y="11" width="1" height="1" fill="#1a1a1a"/><rect x="1" y="16" width="1" height="1" fill="#1a1a1a"/><rect x="1" y="17" width="1" height="1" fill="#1a1a1a"/><rect x="1" y="18" width="1" height="1" fill="#1a1a1a"/><rect x="1" y="19" width="1" height="1" fill="#1a1a1a"/><rect x="1" y="21" width="1" height="1" fill="#1a1a1a"/><rect x="1" y="23" width="1" height="1" fill="#1a1a1a"/><rect x="2" y="2" width="1" height="1" fill="#1a1a1a"/><rect x="2" y="3" width="1" height="1" fill="#1a1a1a"/><rect x="2" y="5" width="1" height="1" fill="#1a1a1a"/><rect x="2" y="7" width="1" height="1" fill="#1a1a1a"/><rect x="2" y="8" width="1" height="1" fill="#1a1a1a"/><rect x="2" y="9" width="1" height="1" fill="#1a1a1a"/><rect x="2" y="11" width="1" height="1" fill="#1a1a1a"/><rect x="2" y="12" width="1" height="1" fill="#1a1a1a"/><rect x="2" y="13" width="1" height="1" fill="#1a1a1a"/><rect x="2" y="16" width="1" height="1" fill="#1a1a1a"/><rect x="2" y="17" width="1" height="1" fill="#1a1a1a"/><rect x="2" y="18" width="1" height="1" fill="#1a1a1a"/><rect x="2" y="19" width="1" height="1" fill="#1a1a1a"/><rect x="2" y="21" width="1" height="1" fill="#1a1a1a"/><rect x="2" y="22" width="1" height="1" fill="#1a1a1a"/><rect x="2" y="23" width="1" height="1" fill="#1a1a1a"/><rect x="3" y="0" width="1" height="1" fill="#1a1a1a"/><rect x="3" y="21" width="1" height="1" fill="#1a1a1a"/><rect x="3" y="22" width="1" height="1" fill="#1a1a1a"/><rect x="3" y="23" width="1" height="1" fill="#1a1a1a"/><rect x="4" y="0" width="1" height="1" fill="#1a1a1a"/><rect x="4" y="1" width="1" height="1" fill="#1a1a1a"/><rect x="4" y="21" width="1" height="1" fill="#1a1a1a"/><rect x="5" y="0" width="1" height="1" fill="#1a1a1a"/><rect x="5" y="21" width="1" height="1" fill="#1a1a1a"/><rect x="5" y="22" width="1" height="1" fill="#1a1a1a"/><rect x="6" y="0" width="1" height="1" fill="#1a1a1a"/><rect x="6" y="1" width="1" height="1" fill="#1a1a1a"/><rect x="6" y="22" width="1" height="1" fill="#1a1a1a"/><rect x="6" y="23" width="1" height="1" fill="#1a1a1a"/><rect x="7" y="1" width="1" height="1" fill="#1a1a1a"/><rect x="7" y="21" width="1" height="1" fill="#1a1a1a"/><rect x="7" y="22" width="1" height="1" fill="#1a1a1a"/><rect x="7" y="23" width="1" height="1" fill="#1a1a1a"/><rect x="8" y="0" width="1" height="1" fill="#1a1a1a"/><rect x="8" y="1" width="1" height="1" fill="#1a1a1a"/><rect x="8" y="21" width="1" height="1" fill="#1a1a1a"/><rect x="8" y="22" width="1" height="1" fill="#1a1a1a"/><rect x="8" y="23" width="1" height="1" fill="#1a1a1a"/><rect x="9" y="1" width="1" height="1" fill="#1a1a1a"/><rect x="9" y="21" width="1" height="1" fill="#1a1a1a"/><rect x="9" y="23" width="1" height="1" fill="#1a1a1a"/><rect x="10" y="0" width="1" height="1" fill="#1a1a1a"/><rect x="10" y="22" width="1" height="1" fill="#1a1a1a"/><rect x="10" y="23" width="1" height="1" fill="#1a1a1a"/><rect x="11" y="21" width="1" height="1" fill="#1a1a1a"/><rect x="12" y="0" width="1" height="1" fill="#1a1a1a"/><rect x="12" y="1" width="1" height="1" fill="#1a1a1a"/><rect x="12" y="21" width="1" height="1" fill="#1a1a1a"/><rect x="12" y="22" width="1" height="1" fill="#1a1a1a"/><rect x="13" y="0" width="1" height="1" fill="#1a1a1a"/><rect x="13" y="21" width="1" height="1" fill="#1a1a1a"/><rect x="13" y="23" width="1" height="1" fill="#1a1a1a"/><rect x="14" y="0" width="1" height="1" fill="#1a1a1a"/><rect x="14" y="1" width="1" height="1" fill="#1a1a1a"/><rect x="14" y="22" width="1" height="1" fill="#1a1a1a"/><rect x="14" y="23" width="1" height="1" fill="#1a1a1a"/><rect x="15" y="0" width="1" height="1" fill="#1a1a1a"/><rect x="15" y="21" width="1" height="1" fill="#1a1a1a"/><rect x="15" y="22" width="1" height="1" fill="#1a1a1a"/><rect x="16" y="0" width="1" height="1" fill="#1a1a1a"/><rect x="16" y="1" width="1" height="1" fill="#1a1a1a"/><rect x="16" y="21" width="1" height="1" fill="#1a1a1a"/><rect x="16" y="22" width="1" height="1" fill="#1a1a1a"/><rect x="16" y="23" width="1" height="1" fill="#1a1a1a"/><rect x="17" y="0" width="1" height="1" fill="#1a1a1a"/><rect x="17" y="1" width="1" height="1" fill="#1a1a1a"/><rect x="17" y="21" width="1" height="1" fill="#1a1a1a"/><rect x="17" y="22" width="1" height="1" fill="#1a1a1a"/><rect x="17" y="23" width="1" height="1" fill="#1a1a1a"/><rect x="18" y="21" width="1" height="1" fill="#1a1a1a"/><rect x="18" y="22" width="1" height="1" fill="#1a1a1a"/><rect x="18" y="23" width="1" height="1" fill="#1a1a1a"/><rect x="19" y="0" width="1" height="1" fill="#1a1a1a"/><rect x="19" y="1" width="1" height="1" fill="#1a1a1a"/><rect x="19" y="21" width="1" height="1" fill="#1a1a1a"/><rect x="20" y="1" width="1" height="1" fill="#1a1a1a"/><rect x="20" y="21" width="1" height="1" fill="#1a1a1a"/><rect x="20" y="22" width="1" height="1" fill="#1a1a1a"/><rect x="21" y="0" width="1" height="1" fill="#1a1a1a"/><rect x="21" y="21" width="1" height="1" fill="#1a1a1a"/><rect x="21" y="22" width="1" height="1" fill="#1a1a1a"/><rect x="23" y="0" width="1" height="1" fill="#1a1a1a"/><rect x="23" y="1" width="1" height="1" fill="#1a1a1a"/><rect x="23" y="23" width="1" height="1" fill="#1a1a1a"/><rect x="24" y="7" width="1" height="1" fill="#555"/><rect x="24" y="17" width="1" height="1" fill="#555"/><rect x="24" y="19" width="1" height="1" fill="#555"/><rect x="24" y="21" width="1" height="1" fill="#1a1a1a"/><rect x="24" y="22" width="1" height="1" fill="#1a1a1a"/><rect x="24" y="23" width="1" height="1" fill="#1a1a1a"/><rect x="25" y="0" width="1" height="1" fill="#1a1a1a"/><rect x="25" y="1" width="1" height="1" fill="#1a1a1a"/><rect x="25" y="4" width="1" height="1" fill="#555"/><rect x="25" y="7" width="1" height="1" fill="#555"/><rect x="25" y="8" width="1" height="1" fill="#555"/><rect x="25" y="15" width="1" height="1" fill="#555"/><rect x="25" y="21" width="1" height="1" fill="#1a1a1a"/><rect x="25" y="22" width="1" height="1" fill="#1a1a1a"/><rect x="25" y="23" width="1" height="1" fill="#1a1a1a"/><rect x="26" y="0" width="1" height="1" fill="#1a1a1a"/><rect x="26" y="6" width="1" height="1" fill="#555"/><rect x="26" y="9" width="1" height="1" fill="#555"/><rect x="26" y="17" width="1" height="1" fill="#555"/><rect x="26" y="18" width="1" height="1" fill="#555"/><rect x="26" y="20" width="1" height="1" fill="#555"/><rect x="26" y="22" width="1" height="1" fill="#1a1a1a"/><rect x="26" y="23" width="1" height="1" fill="#1a1a1a"/><rect x="3" y="2" width="5" height="19" fill="#a9adad"/><rect x="8" y="2" width="9" height="19" fill="#7f9595"/><rect x="17" y="2" width="7" height="9" fill="#7c7c7c"/><rect x="17" y="11" width="7" height="10" fill="#8a8a8a"/><rect x="1" y="25" width="2" height="2" fill="#5cb85c"/><rect x="5" y="25.500" width="20" height="1" fill="#d0d0d0"/></svg>
<div class="td ak" style="left:1704px;top:630.1px">修改</div><div class="td ak" style="left:1755px;top:630.1px">详情</div><svg class="abs" style="left:1805px;top:636.6px" width="22" height="5" viewBox="0 0 22 5" fill="#999"><circle cx="2.500" cy="2.500" r="2"/><circle cx="11" cy="2.500" r="2"/><circle cx="19.500" cy="2.500" r="2"/></svg>
<svg class="abs" style="left:1624px;top:674px" width="28" height="28" viewBox="0 0 28 28"><rect x="0" y="0" width="27" height="24" fill="#fff"/><rect x="0" y="0" width="1" height="1" fill="#1a1a1a"/><rect x="0" y="1" width="1" height="1" fill="#1a1a1a"/><rect x="0" y="2" width="1" height="1" fill="#1a1a1a"/><rect x="0" y="3" width="1" height="1" fill="#1a1a1a"/><rect x="0" y="4" width="1" height="1" fill="#1a1a1a"/><rect x="0" y="5" width="1" height="1" fill="#1a1a1a"/><rect x="0" y="6" width="1" height="1" fill="#1a1a1a"/><rect x="0" y="8" width="1" height="1" fill="#1a1a1a"/><rect x="0" y="9" width="1" height="1" fill="#1a1a1a"/><rect x="0" y="10" width="1" height="1" fill="#1a1a1a"/><rect x="0" y="11" width="1" height="1" fill="#1a1a1a"/><rect x="0" y="12" width="1" height="1" fill="#1a1a1a"/><rect x="0" y="13" width="1" height="1" fill="#1a1a1a"/><rect x="0" y="14" width="1" height="1" fill="#1a1a1a"/><rect x="0" y="16" width="1" height="1" fill="#1a1a1a"/><rect x="0" y="18" width="1" height="1" fill="#1a1a1a"/><rect x="0" y="19" width="1" height="1" fill="#1a1a1a"/><rect x="0" y="20" width="1" height="1" fill="#1a1a1a"/><rect x="0" y="21" width="1" height="1" fill="#1a1a1a"/><rect x="0" y="23" width="1" height="1" fill="#1a1a1a"/><rect x="1" y="0" width="1" height="1" fill="#1a1a1a"/><rect x="1" y="2" width="1" height="1" fill="#1a1a1a"/><rect x="1" y="3" width="1" height="1" fill="#1a1a1a"/><rect x="1" y="6" width="1" height="1" fill="#1a1a1a"/><rect x="1" y="7" width="1" height="1" fill="#1a1a1a"/><rect x="1" y="8" width="1" height="1" fill="#1a1a1a"/><rect x="1" y="9" width="1" height="1" fill="#1a1a1a"/><rect x="1" y="10" width="1" height="1" fill="#1a1a1a"/><rect x="1" y="11" width="1" height="1" fill="#1a1a1a"/><rect x="1" y="12" width="1" height="1" fill="#1a1a1a"/><rect x="1" y="13" width="1" height="1" fill="#1a1a1a"/><rect x="1" y="14" width="1" height="1" fill="#1a1a1a"/><rect x="1" y="16" width="1" height="1" fill="#1a1a1a"/><rect x="1" y="17" width="1" height="1" fill="#1a1a1a"/><rect x="1" y="18" width="1" height="1" fill="#1a1a1a"/><rect x="1" y="19" width="1" height="1" fill="#1a1a1a"/><rect x="1" y="20" width="1" height="1" fill="#1a1a1a"/><rect x="1" y="21" width="1" height="1" fill="#1a1a1a"/><rect x="2" y="1" width="1" height="1" fill="#1a1a1a"/><rect x="2" y="2" width="1" height="1" fill="#1a1a1a"/><rect x="2" y="3" width="1" height="1" fill="#1a1a1a"/><rect x="2" y="4" width="1" height="1" fill="#1a1a1a"/><rect x="2" y="5" width="1" height="1" fill="#1a1a1a"/><rect x="2" y="6" width="1" height="1" fill="#1a1a1a"/><rect x="2" y="7" width="1" height="1" fill="#1a1a1a"/><rect x="2" y="8" width="1" height="1" fill="#1a1a1a"/><rect x="2" y="9" width="1" height="1" fill="#1a1a1a"/><rect x="2" y="11" width="1" height="1" fill="#1a1a1a"/><rect x="2" y="12" width="1" height="1" fill="#1a1a1a"/><rect x="2" y="14" width="1" height="1" fill="#1a1a1a"/><rect x="2" y="15" width="1" height="1" fill="#1a1a1a"/><rect x="2" y="16" width="1" height="1" fill="#1a1a1a"/><rect x="2" y="17" width="1" height="1" fill="#1a1a1a"/><rect x="2" y="18" width="1" height="1" fill="#1a1a1a"/><rect x="2" y="20" width="1" height="1" fill="#1a1a1a"/><rect x="2" y="21" width="1" height="1" fill="#1a1a1a"/><rect x="2" y="22" width="1" height="1" fill="#1a1a1a"/><rect x="2" y="23" width="1" height="1" fill="#1a1a1a"/><rect x="3" y="0" width="1" height="1" fill="#1a1a1a"/><rect x="3" y="1" width="1" height="1" fill="#1a1a1a"/><rect x="3" y="21" width="1" height="1" fill="#1a1a1a"/><rect x="3" y="22" width="1" height="1" fill="#1a1a1a"/><rect x="3" y="23" width="1" height="1" fill="#1a1a1a"/><rect x="4" y="0" width="1" height="1" fill="#1a1a1a"/><rect x="4" y="1" width="1" height="1" fill="#1a1a1a"/><rect x="4" y="21" width="1" height="1" fill="#1a1a1a"/><rect x="4" y="22" width="1" height="1" fill="#1a1a1a"/><rect x="5" y="0" width="1" height="1" fill="#1a1a1a"/><rect x="5" y="21" width="1" height="1" fill="#1a1a1a"/><rect x="5" y="23" width="1" height="1" fill="#1a1a1a"/><rect x="6" y="0" width="1" height="1" fill="#1a1a1a"/><rect x="6" y="22" width="1" height="1" fill="#1a1a1a"/><rect x="6" y="23" width="1" height="1" fill="#1a1a1a"/><rect x="7" y="1" width="1" height="1" fill="#1a1a1a"/><rect x="7" y="21" width="1" height="1" fill="#1a1a1a"/><rect x="7" y="22" width="1" height="1" fill="#1a1a1a"/><rect x="7" y="23" width="1" height="1" fill="#1a1a1a"/><rect x="8" y="0" width="1" height="1" fill="#1a1a1a"/><rect x="8" y="22" width="1" height="1" fill="#1a1a1a"/><rect x="8" y="23" width="1" height="1" fill="#1a1a1a"/><rect x="9" y="0" width="1" height="1" fill="#1a1a1a"/><rect x="9" y="22" width="1" height="1" fill="#1a1a1a"/><rect x="9" y="23" width="1" height="1" fill="#1a1a1a"/><rect x="10" y="0" width="1" height="1" fill="#1a1a1a"/><rect x="10" y="1" width="1" height="1" fill="#1a1a1a"/><rect x="10" y="21" width="1" height="1" fill="#1a1a1a"/><rect x="10" y="22" width="1" height="1" fill="#1a1a1a"/><rect x="11" y="1" width="1" height="1" fill="#1a1a1a"/><rect x="11" y="21" width="1" height="1" fill="#1a1a1a"/><rect x="11" y="23" width="1" height="1" fill="#1a1a1a"/><rect x="12" y="1" width="1" height="1" fill="#1a1a1a"/><rect x="12" y="21" width="1" height="1" fill="#1a1a1a"/><rect x="12" y="23" width="1" height="1" fill="#1a1a1a"/><rect x="13" y="0" width="1" height="1" fill="#1a1a1a"/><rect x="13" y="1" width="1" height="1" fill="#1a1a1a"/><rect x="13" y="21" width="1" height="1" fill="#1a1a1a"/><rect x="13" y="22" width="1" height="1" fill="#1a1a1a"/><rect x="13" y="23" width="1" height="1" fill="#1a1a1a"/><rect x="14" y="1" width="1" height="1" fill="#1a1a1a"/><rect x="14" y="21" width="1" height="1" fill="#1a1a1a"/><rect x="14" y="22" width="1" height="1" fill="#1a1a1a"/><rect x="15" y="0" width="1" height="1" fill="#1a1a1a"/><rect x="15" y="1" width="1" height="1" fill="#1a1a1a"/><rect x="16" y="0" width="1" height="1" fill="#1a1a1a"/><rect x="16" y="1" width="1" height="1" fill="#1a1a1a"/><rect x="16" y="23" width="1" height="1" fill="#1a1a1a"/><rect x="17" y="0" width="1" height="1" fill="#1a1a1a"/><rect x="17" y="1" width="1" height="1" fill="#1a1a1a"/><rect x="17" y="22" width="1" height="1" fill="#1a1a1a"/><rect x="17" y="23" width="1" height="1" fill="#1a1a1a"/><rect x="19" y="0" width="1" height="1" fill="#1a1a1a"/><rect x="19" y="21" width="1" height="1" fill="#1a1a1a"/><rect x="19" y="22" width="1" height="1" fill="#1a1a1a"/><rect x="19" y="23" width="1" height="1" fill="#1a1a1a"/><rect x="20" y="0" width="1" height="1" fill="#1a1a1a"/><rect x="20" y="21" width="1" height="1" fill="#1a1a1a"/><rect x="20" y="22" width="1" height="1" fill="#1a1a1a"/><rect x="20" y="23" width="1" height="1" fill="#1a1a1a"/><rect x="21" y="0" width="1" height="1" fill="#1a1a1a"/><rect x="21" y="1" width="1" height="1" fill="#1a1a1a"/><rect x="21" y="22" width="1" height="1" fill="#1a1a1a"/><rect x="21" y="23" width="1" height="1" fill="#1a1a1a"/><rect x="22" y="0" width="1" height="1" fill="#1a1a1a"/><rect x="22" y="1" width="1" height="1" fill="#1a1a1a"/><rect x="22" y="21" width="1" height="1" fill="#1a1a1a"/><rect x="22" y="22" width="1" height="1" fill="#1a1a1a"/><rect x="22" y="23" width="1" height="1" fill="#1a1a1a"/><rect x="23" y="0" width="1" height="1" fill="#1a1a1a"/><rect x="23" y="1" width="1" height="1" fill="#1a1a1a"/><rect x="23" y="22" width="1" height="1" fill="#1a1a1a"/><rect x="24" y="0" width="1" height="1" fill="#1a1a1a"/><rect x="24" y="1" width="1" height="1" fill="#1a1a1a"/><rect x="24" y="4" width="1" height="1" fill="#555"/><rect x="24" y="7" width="1" height="1" fill="#555"/><rect x="24" y="10" width="1" height="1" fill="#555"/><rect x="24" y="13" width="1" height="1" fill="#555"/><rect x="24" y="15" width="1" height="1" fill="#555"/><rect x="24" y="19" width="1" height="1" fill="#555"/><rect x="24" y="21" width="1" height="1" fill="#1a1a1a"/><rect x="24" y="23" width="1" height="1" fill="#1a1a1a"/><rect x="25" y="0" width="1" height="1" fill="#1a1a1a"/><rect x="25" y="3" width="1" height="1" fill="#555"/><rect x="25" y="18" width="1" height="1" fill="#555"/><rect x="25" y="19" width="1" height="1" fill="#555"/><rect x="25" y="21" width="1" height="1" fill="#1a1a1a"/><rect x="25" y="22" width="1" height="1" fill="#1a1a1a"/><rect x="26" y="0" width="1" height="1" fill="#1a1a1a"/><rect x="26" y="7" width="1" height="1" fill="#555"/><rect x="26" y="20" width="1" height="1" fill="#555"/><rect x="26" y="21" width="1" height="1" fill="#1a1a1a"/><rect x="26" y="22" width="1" height="1" fill="#1a1a1a"/><rect x="3" y="2" width="5" height="19" fill="#a9adad"/><rect x="8" y="2" width="9" height="19" fill="#7f9595"/><rect x="17" y="2" width="7" height="9" fill="#7c7c7c"/><rect x="17" y="11" width="7" height="10" fill="#8a8a8a"/><rect x="1" y="25" width="2" height="2" fill="#5cb85c"/><rect x="5" y="25.500" width="20" height="1" fill="#d0d0d0"/></svg>
<div class="td ak" style="left:1704px;top:676.9px">详情</div><div class="td ak" style="left:1755px;top:676.9px">删除</div><div class="td ak" style="left:1806px;top:676.9px">调拨</div>
<svg class="abs" style="left:1624px;top:721px" width="28" height="28" viewBox="0 0 28 28"><rect x="0" y="0" width="27" height="24" fill="#fff"/><rect x="0" y="0" width="1" height="1" fill="#1a1a1a"/><rect x="0" y="1" width="1" height="1" fill="#1a1a1a"/><rect x="0" y="2" width="1" height="1" fill="#1a1a1a"/><rect x="0" y="4" width="1" height="1" fill="#1a1a1a"/><rect x="0" y="5" width="1" height="1" fill="#1a1a1a"/><rect x="0" y="6" width="1" height="1" fill="#1a1a1a"/><rect x="0" y="7" width="1" height="1" fill="#1a1a1a"/><rect x="0" y="9" width="1" height="1" fill="#1a1a1a"/><rect x="0" y="10" width="1" height="1" fill="#1a1a1a"/><rect x="0" y="11" width="1" height="1" fill="#1a1a1a"/><rect x="0" y="12" width="1" height="1" fill="#1a1a1a"/><rect x="0" y="13" width="1" height="1" fill="#1a1a1a"/><rect x="0" y="15" width="1" height="1" fill="#1a1a1a"/><rect x="0" y="16" width="1" height="1" fill="#1a1a1a"/><rect x="0" y="17" width="1" height="1" fill="#1a1a1a"/><rect x="0" y="18" width="1" height="1" fill="#1a1a1a"/><rect x="1" y="2" width="1" height="1" fill="#1a1a1a"/><rect x="1" y="4" width="1" height="1" fill="#1a1a1a"/><rect x="1" y="6" width="1" height="1" fill="#1a1a1a"/><rect x="1" y="7" width="1" height="1" fill="#1a1a1a"/><rect x="1" y="8" width="1" height="1" fill="#1a1a1a"/><rect x="1" y="9" width="1" height="1" fill="#1a1a1a"/><rect x="1" y="10" width="1" height="1" fill="#1a1a1a"/><rect x="1" y="11" width="1" height="1" fill="#1a1a1a"/><rect x="1" y="15" width="1" height="1" fill="#1a1a1a"/><rect x="1" y="16" width="1" height="1" fill="#1a1a1a"/><rect x="1" y="18" width="1" height="1" fill="#1a1a1a"/><rect x="1" y="19" width="1" height="1" fill="#1a1a1a"/><rect x="1" y="20" width="1" height="1" fill="#1a1a1a"/><rect x="1" y="21" width="1" height="1" fill="#1a1a1a"/><rect x="1" y="22" width="1" height="1" fill="#1a1a1a"/><rect x="1" y="23" width="1" height="1" fill="#1a1a1a"/><rect x="2" y="0" width="1" height="1" fill="#1a1a1a"/><rect x="2" y="1" width="1" height="1" fill="#1a1a1a"/><rect x="2" y="2" width="1" height="1" fill="#1a1a1a"/><rect x="2" y="3" width="1" height="1" fill="#1a1a1a"/><rect x="2" y="4" width="1" height="1" fill="#1a1a1a"/><rect x="2" y="5" width="1" height="1" fill="#1a1a1a"/><rect x="2" y="6" width="1" height="1" fill="#1a1a1a"/><rect x="2" y="7" width="1" height="1" fill="#1a1a1a"/><rect x="2" y="8" width="1" height="1" fill="#1a1a1a"/><rect x="2" y="9" width="1" height="1" fill="#1a1a1a"/><rect x="2" y="10" width="1" height="1" fill="#1a1a1a"/><rect x="2" y="11" width="1" height="1" fill="#1a1a1a"/><rect x="2" y="13" width="1" height="1" fill="#1a1a1a"/><rect x="2" y="16" width="1" height="1" fill="#1a1a1a"/><rect x="2" y="17" width="1" height="1" fill="#1a1a1a"/><rect x="2" y="20" width="1" height="1" fill="#1a1a1a"/><rect x="2" y="21" width="1" height="1" fill="#1a1a1a"/><rect x="2" y="22" width="1" height="1" fill="#1a1a1a"/><rect x="3" y="21" width="1" height="1" fill="#1a1a1a"/><rect x="3" y="23" width="1" height="1" fill="#1a1a1a"/><rect x="4" y="1" width="1" height="1" fill="#1a1a1a"/><rect x="4" y="22" width="1" height="1" fill="#1a1a1a"/><rect x="5" y="0" width="1" height="1" fill="#1a1a1a"/><rect x="5" y="1" width="1" height="1" fill="#1a1a1a"/><rect x="5" y="21" width="1" height="1" fill="#1a1a1a"/><rect x="5" y="22" width="1" height="1" fill="#1a1a1a"/><rect x="5" y="23" width="1" height="1" fill="#1a1a1a"/><rect x="6" y="1" width="1" height="1" fill="#1a1a1a"/><rect x="6" y="21" width="1" height="1" fill="#1a1a1a"/><rect x="6" y="22" width="1" height="1" fill="#1a1a1a"/><rect x="6" y="23" width="1" height="1" fill="#1a1a1a"/><rect x="7" y="0" width="1" height="1" fill="#1a1a1a"/><rect x="7" y="1" width="1" height="1" fill="#1a1a1a"/><rect x="7" y="21" width="1" height="1" fill="#1a1a1a"/><rect x="7" y="22" width="1" height="1" fill="#1a1a1a"/><rect x="7" y="23" width="1" height="1" fill="#1a1a1a"/><rect x="8" y="0" width="1" height="1" fill="#1a1a1a"/><rect x="8" y="1" width="1" height="1" fill="#1a1a1a"/><rect x="8" y="21" width="1" height="1" fill="#1a1a1a"/><rect x="8" y="22" width="1" height="1" fill="#1a1a1a"/><rect x="8" y="23" width="1" height="1" fill="#1a1a1a"/><rect x="9" y="0" width="1" height="1" fill="#1a1a1a"/><rect x="9" y="21" width="1" height="1" fill="#1a1a1a"/><rect x="9" y="22" width="1" height="1" fill="#1a1a1a"/><rect x="9" y="23" width="1" height="1" fill="#1a1a1a"/><rect x="10" y="0" width="1" height="1" fill="#1a1a1a"/><rect x="10" y="1" width="1" height="1" fill="#1a1a1a"/><rect x="10" y="21" width="1" height="1" fill="#1a1a1a"/><rect x="10" y="22" width="1" height="1" fill="#1a1a1a"/><rect x="11" y="0" width="1" height="1" fill="#1a1a1a"/><rect x="11" y="1" width="1" height="1" fill="#1a1a1a"/><rect x="11" y="21" width="1" height="1" fill="#1a1a1a"/><rect x="11" y="23" width="1" height="1" fill="#1a1a1a"/><rect x="12" y="0" width="1" height="1" fill="#1a1a1a"/><rect x="12" y="1" width="1" height="1" fill="#1a1a1a"/><rect x="12" y="21" width="1" height="1" fill="#1a1a1a"/><rect x="12" y="22" width="1" height="1" fill="#1a1a1a"/><rect x="12" y="23" width="1" height="1" fill="#1a1a1a"/><rect x="13" y="21" width="1" height="1" fill="#1a1a1a"/><rect x="13" y="22" width="1" height="1" fill="#1a1a1a"/><rect x="14" y="0" width="1" height="1" fill="#1a1a1a"/><rect x="14" y="1" width="1" height="1" fill="#1a1a1a"/><rect x="14" y="21" width="1" height="1" fill="#1a1a1a"/><rect x="14" y="22" width="1" height="1" fill="#1a1a1a"/><rect x="14" y="23" width="1" height="1" fill="#1a1a1a"/><rect x="15" y="0" width="1" height="1" fill="#1a1a1a"/><rect x="15" y="1" width="1" height="1" fill="#1a1a1a"/><rect x="15" y="21" width="1" height="1" fill="#1a1a1a"/><rect x="15" y="22" width="1" height="1" fill="#1a1a1a"/><rect x="15" y="23" width="1" height="1" fill="#1a1a1a"/><rect x="16" y="1" width="1" height="1" fill="#1a1a1a"/><rect x="16" y="21" width="1" height="1" fill="#1a1a1a"/><rect x="16" y="23" width="1" height="1" fill="#1a1a1a"/><rect x="17" y="0" width="1" height="1" fill="#1a1a1a"/><rect x="17" y="1" width="1" height="1" fill="#1a1a1a"/><rect x="17" y="21" width="1" height="1" fill="#1a1a1a"/><rect x="17" y="22" width="1" height="1" fill="#1a1a1a"/><rect x="17" y="23" width="1" height="1" fill="#1a1a1a"/><rect x="18" y="0" width="1" height="1" fill="#1a1a1a"/><rect x="18" y="21" width="1" height="1" fill="#1a1a1a"/><rect x="18" y="23" width="1" height="1" fill="#1a1a1a"/><rect x="19" y="0" width="1" height="1" fill="#1a1a1a"/><rect x="19" y="1" width="1" height="1" fill="#1a1a1a"/><rect x="19" y="21" width="1" height="1" fill="#1a1a1a"/><rect x="19" y="22" width="1" height="1" fill="#1a1a1a"/><rect x="19" y="23" width="1" height="1" fill="#1a1a1a"/><rect x="20" y="0" width="1" height="1" fill="#1a1a1a"/><rect x="20" y="22" width="1" height="1" fill="#1a1a1a"/><rect x="20" y="23" width="1" height="1" fill="#1a1a1a"/><rect x="21" y="0" width="1" height="1" fill="#1a1a1a"/><rect x="21" y="21" width="1" height="1" fill="#1a1a1a"/><rect x="21" y="23" width="1" height="1" fill="#1a1a1a"/><rect x="22" y="0" width="1" height="1" fill="#1a1a1a"/><rect x="22" y="1" width="1" height="1" fill="#1a1a1a"/><rect x="22" y="21" width="1" height="1" fill="#1a1a1a"/><rect x="22" y="23" width="1" height="1" fill="#1a1a1a"/><rect x="23" y="0" width="1" height="1" fill="#1a1a1a"/><rect x="23" y="1" width="1" height="1" fill="#1a1a1a"/><rect x="23" y="21" width="1" height="1" fill="#1a1a1a"/><rect x="23" y="23" width="1" height="1" fill="#1a1a1a"/><rect x="24" y="1" width="1" height="1" fill="#1a1a1a"/><rect x="24" y="10" width="1" height="1" fill="#555"/><rect x="24" y="11" width="1" height="1" fill="#555"/><rect x="24" y="18" width="1" height="1" fill="#555"/><rect x="24" y="19" width="1" height="1" fill="#555"/><rect x="24" y="20" width="1" height="1" fill="#555"/><rect x="24" y="22" width="1" height="1" fill="#1a1a1a"/><rect x="25" y="9" width="1" height="1" fill="#555"/><rect x="25" y="16" width="1" height="1" fill="#555"/><rect x="25" y="17" width="1" height="1" fill="#555"/><rect x="25" y="21" width="1" height="1" fill="#1a1a1a"/><rect x="26" y="0" width="1" height="1" fill="#1a1a1a"/><rect x="26" y="8" width="1" height="1" fill="#555"/><rect x="26" y="11" width="1" height="1" fill="#555"/><rect x="26" y="13" width="1" height="1" fill="#555"/><rect x="26" y="15" width="1" height="1" fill="#555"/><rect x="26" y="16" width="1" height="1" fill="#555"/><rect x="26" y="21" width="1" height="1" fill="#1a1a1a"/><rect x="26" y="23" width="1" height="1" fill="#1a1a1a"/><rect x="3" y="2" width="5" height="19" fill="#a9adad"/><rect x="8" y="2" width="9" height="19" fill="#7f9595"/><rect x="17" y="2" width="7" height="9" fill="#7c7c7c"/><rect x="17" y="11" width="7" height="10" fill="#8a8a8a"/><rect x="1" y="25" width="2" height="2" fill="#5cb85c"/><rect x="5" y="25.500" width="20" height="1" fill="#d0d0d0"/></svg>
<div class="td ak" style="left:1704px;top:723.7px">修改</div><div class="td ak" style="left:1755px;top:723.7px">详情</div><svg class="abs" style="left:1805px;top:730.2px" width="22" height="5" viewBox="0 0 22 5" fill="#999"><circle cx="2.500" cy="2.500" r="2"/><circle cx="11" cy="2.500" r="2"/><circle cx="19.500" cy="2.500" r="2"/></svg>
<svg class="abs" style="left:1624px;top:767px" width="28" height="28" viewBox="0 0 28 28"><rect x="0" y="0" width="27" height="24" fill="#fff"/><rect x="0" y="0" width="1" height="1" fill="#1a1a1a"/><rect x="0" y="2" width="1" height="1" fill="#1a1a1a"/><rect x="0" y="4" width="1" height="1" fill="#1a1a1a"/><rect x="0" y="5" width="1" height="1" fill="#1a1a1a"/><rect x="0" y="7" width="1" height="1" fill="#1a1a1a"/><rect x="0" y="8" width="1" height="1" fill="#1a1a1a"/><rect x="0" y="9" width="1" height="1" fill="#1a1a1a"/><rect x="0" y="10" width="1" height="1" fill="#1a1a1a"/><rect x="0" y="12" width="1" height="1" fill="#1a1a1a"/><rect x="0" y="13" width="1" height="1" fill="#1a1a1a"/><rect x="0" y="15" width="1" height="1" fill="#1a1a1a"/><rect x="0" y="16" width="1" height="1" fill="#1a1a1a"/><rect x="0" y="18" width="1" height="1" fill="#1a1a1a"/><rect x="0" y="19" width="1" height="1" fill="#1a1a1a"/><rect x="0" y="20" width="1" height="1" fill="#1a1a1a"/><rect x="0" y="21" width="1" height="1" fill="#1a1a1a"/><rect x="0" y="22" width="1" height="1" fill="#1a1a1a"/><rect x="0" y="23" width="1" height="1" fill="#1a1a1a"/><rect x="1" y="0" width="1" height="1" fill="#1a1a1a"/><rect x="1" y="1" width="1" height="1" fill="#1a1a1a"/><rect x="1" y="2" width="1" height="1" fill="#1a1a1a"/><rect x="1" y="3" width="1" height="1" fill="#1a1a1a"/><rect x="1" y="5" width="1" height="1" fill="#1a1a1a"/><rect x="1" y="7" width="1" height="1" fill="#1a1a1a"/><rect x="1" y="8" width="1" height="1" fill="#1a1a1a"/><rect x="1" y="10" width="1" height="1" fill="#1a1a1a"/><rect x="1" y="11" width="1" height="1" fill="#1a1a1a"/><rect x="1" y="12" width="1" height="1" fill="#1a1a1a"/><rect x="1" y="13" width="1" height="1" fill="#1a1a1a"/><rect x="1" y="14" width="1" height="1" fill="#1a1a1a"/><rect x="1" y="15" width="1" height="1" fill="#1a1a1a"/><rect x="1" y="17" width="1" height="1" fill="#1a1a1a"/><rect x="1" y="18" width="1" height="1" fill="#1a1a1a"/><rect x="1" y="19" width="1" height="1" fill="#1a1a1a"/><rect x="1" y="20" width="1" height="1" fill="#1a1a1a"/><rect x="1" y="22" width="1" height="1" fill="#1a1a1a"/><rect x="1" y="23" width="1" height="1" fill="#1a1a1a"/><rect x="2" y="1" width="1" height="1" fill="#1a1a1a"/><rect x="2" y="2" width="1" height="1" fill="#1a1a1a"/><rect x="2" y="3" width="1" height="1" fill="#1a1a1a"/><rect x="2" y="5" width="1" height="1" fill="#1a1a1a"/><rect x="2" y="6" width="1" height="1" fill="#1a1a1a"/><rect x="2" y="7" width="1" height="1" fill="#1a1a1a"/><rect x="2" y="8" width="1" height="1" fill="#1a1a1a"/><rect x="2" y="9" width="1" height="1" fill="#1a1a1a"/><rect x="2" y="10" width="1" height="1" fill="#1a1a1a"/><rect x="2" y="11" width="1" height="1" fill="#1a1a1a"/><rect x="2" y="12" width="1" height="1" fill="#1a1a1a"/><rect x="2" y="13" width="1" height="1" fill="#1a1a1a"/><rect x="2" y="14" width="1" height="1" fill="#1a1a1a"/><rect x="2" y="15" width="1" height="1" fill="#1a1a1a"/><rect x="2" y="16" width="1" height="1" fill="#1a1a1a"/><rect x="2" y="17" width="1" height="1" fill="#1a1a1a"/><rect x="2" y="20" width="1" height="1" fill="#1a1a1a"/><rect x="2" y="21" width="1" height="1" fill="#1a1a1a"/><rect x="2" y="23" width="1" height="1" fill="#1a1a1a"/><rect x="3" y="0" width="1" height="1" fill="#1a1a1a"/><rect x="3" y="22" width="1" height="1" fill="#1a1a1a"/><rect x="3" y="23" width="1" height="1" fill="#1a1a1a"/><rect x="4" y="0" width="1" height="1" fill="#1a1a1a"/><rect x="4" y="21" width="1" height="1" fill="#1a1a1a"/><rect x="4" y="22" width="1" height="1" fill="#1a1a1a"/><rect x="4" y="23" width="1" height="1" fill="#1a1a1a"/><rect x="5" y="0" width="1" height="1" fill="#1a1a1a"/><rect x="5" y="1" width="1" height="1" fill="#1a1a1a"/><rect x="5" y="21" width="1" height="1" fill="#1a1a1a"/><rect x="5" y="22" width="1" height="1" fill="#1a1a1a"/><rect x="5" y="23" width="1" height="1" fill="#1a1a1a"/><rect x="6" y="0" width="1" height="1" fill="#1a1a1a"/><rect x="6" y="21" width="1" height="1" fill="#1a1a1a"/><rect x="6" y="22" width="1" height="1" fill="#1a1a1a"/><rect x="7" y="0" width="1" height="1" fill="#1a1a1a"/><rect x="7" y="1" width="1" height="1" fill="#1a1a1a"/><rect x="7" y="21" width="1" height="1" fill="#1a1a1a"/><rect x="7" y="22" width="1" height="1" fill="#1a1a1a"/><rect x="7" y="23" width="1" height="1" fill="#1a1a1a"/><rect x="8" y="0" width="1" height="1" fill="#1a1a1a"/><rect x="8" y="21" width="1" height="1" fill="#1a1a1a"/><rect x="8" y="22" width="1" height="1" fill="#1a1a1a"/><rect x="8" y="23" width="1" height="1" fill="#1a1a1a"/><rect x="9" y="1" width="1" height="1" fill="#1a1a1a"/><rect x="9" y="22" width="1" height="1" fill="#1a1a1a"/><rect x="9" y="23" width="1" height="1" fill="#1a1a1a"/><rect x="10" y="0" width="1" height="1" fill="#1a1a1a"/><rect x="10" y="22" width="1" height="1" fill="#1a1a1a"/><rect x="11" y="0" width="1" height="1" fill="#1a1a1a"/><rect x="11" y="1" width="1" height="1" fill="#1a1a1a"/><rect x="11" y="22" width="1" height="1" fill="#1a1a1a"/><rect x="12" y="0" width="1" height="1" fill="#1a1a1a"/><rect x="12" y="21" width="1" height="1" fill="#1a1a1a"/><rect x="12" y="22" width="1" height="1" fill="#1a1a1a"/><rect x="13" y="0" width="1" height="1" fill="#1a1a1a"/><rect x="13" y="1" width="1" height="1" fill="#1a1a1a"/><rect x="13" y="21" width="1" height="1" fill="#1a1a1a"/><rect x="13" y="22" width="1" height="1" fill="#1a1a1a"/><rect x="13" y="23" width="1" height="1" fill="#1a1a1a"/><rect x="14" y="0" width="1" height="1" fill="#1a1a1a"/><rect x="14" y="1" width="1" height="1" fill="#1a1a1a"/><rect x="14" y="21" width="1" height="1" fill="#1a1a1a"/><rect x="14" y="22" width="1" height="1" fill="#1a1a1a"/><rect x="14" y="23" width="1" height="1" fill="#1a1a1a"/><rect x="15" y="0" width="1" height="1" fill="#1a1a1a"/><rect x="15" y="21" width="1" height="1" fill="#1a1a1a"/><rect x="15" y="22" width="1" height="1" fill="#1a1a1a"/><rect x="15" y="23" width="1" height="1" fill="#1a1a1a"/><rect x="16" y="0" width="1" height="1" fill="#1a1a1a"/><rect x="16" y="1" width="1" height="1" fill="#1a1a1a"/><rect x="16" y="21" width="1" height="1" fill="#1a1a1a"/><rect x="16" y="23" width="1" height="1" fill="#1a1a1a"/><rect x="17" y="0" width="1" height="1" fill="#1a1a1a"/><rect x="17" y="1" width="1" height="1" fill="#1a1a1a"/><rect x="17" y="21" width="1" height="1" fill="#1a1a1a"/><rect x="17" y="22" width="1" height="1" fill="#1a1a1a"/><rect x="17" y="23" width="1" height="1" fill="#1a1a1a"/><rect x="18" y="1" width="1" height="1" fill="#1a1a1a"/><rect x="18" y="21" width="1" height="1" fill="#1a1a1a"/><rect x="18" y="22" width="1" height="1" fill="#1a1a1a"/><rect x="18" y="23" width="1" height="1" fill="#1a1a1a"/><rect x="19" y="0" width="1" height="1" fill="#1a1a1a"/><rect x="19" y="1" width="1" height="1" fill="#1a1a1a"/><rect x="19" y="23" width="1" height="1" fill="#1a1a1a"/><rect x="20" y="0" width="1" height="1" fill="#1a1a1a"/><rect x="20" y="21" width="1" height="1" fill="#1a1a1a"/><rect x="20" y="22" width="1" height="1" fill="#1a1a1a"/><rect x="21" y="0" width="1" height="1" fill="#1a1a1a"/><rect x="22" y="0" width="1" height="1" fill="#1a1a1a"/><rect x="22" y="21" width="1" height="1" fill="#1a1a1a"/><rect x="22" y="22" width="1" height="1" fill="#1a1a1a"/><rect x="22" y="23" width="1" height="1" fill="#1a1a1a"/><rect x="23" y="0" width="1" height="1" fill="#1a1a1a"/><rect x="23" y="1" width="1" height="1" fill="#1a1a1a"/><rect x="23" y="21" width="1" height="1" fill="#1a1a1a"/><rect x="23" y="23" width="1" height="1" fill="#1a1a1a"/><rect x="24" y="0" width="1" height="1" fill="#1a1a1a"/><rect x="24" y="1" width="1" height="1" fill="#1a1a1a"/><rect x="24" y="3" width="1" height="1" fill="#555"/><rect x="24" y="6" width="1" height="1" fill="#555"/><rect x="24" y="8" width="1" height="1" fill="#555"/><rect x="24" y="17" width="1" height="1" fill="#555"/><rect x="24" y="18" width="1" height="1" fill="#555"/><rect x="24" y="23" width="1" height="1" fill="#1a1a1a"/><rect x="25" y="1" width="1" height="1" fill="#1a1a1a"/><rect x="25" y="3" width="1" height="1" fill="#555"/><rect x="25" y="11" width="1" height="1" fill="#555"/><rect x="25" y="12" width="1" height="1" fill="#555"/><rect x="25" y="17" width="1" height="1" fill="#555"/><rect x="25" y="18" width="1" height="1" fill="#555"/><rect x="25" y="19" width="1" height="1" fill="#555"/><rect x="25" y="22" width="1" height="1" fill="#1a1a1a"/><rect x="25" y="23" width="1" height="1" fill="#1a1a1a"/><rect x="26" y="1" width="1" height="1" fill="#1a1a1a"/><rect x="26" y="2" width="1" height="1" fill="#555"/><rect x="26" y="8" width="1" height="1" fill="#555"/><rect x="26" y="12" width="1" height="1" fill="#555"/><rect x="26" y="22" width="1" height="1" fill="#1a1a1a"/><rect x="26" y="23" width="1" height="1" fill="#1a1a1a"/><rect x="3" y="2" width="5" height="19" fill="#a9adad"/><rect x="8" y="2" width="9" height="19" fill="#7f9595"/><rect x="17" y="2" width="7" height="9" fill="#7c7c7c"/><rect x="17" y="11" width="7" height="10" fill="#8a8a8a"/><rect x="1" y="25" width="2" height="2" fill="#5cb85c"/><rect x="5" y="25.500" width="20" height="1" fill="#d0d0d0"/></svg>
<div class="td ak" style="left:1704px;top:770.5px">修改</div><div class="td ak" style="left:1755px;top:770.5px">详情</div><svg class="abs" style="left:1805px;top:777.0px" width="22" height="5" viewBox="0 0 22 5" fill="#999"><circle cx="2.500" cy="2.500" r="2"/><circle cx="11" cy="2.500" r="2"/><circle cx="19.500" cy="2.500" r="2"/></svg>
<svg class="abs" style="left:1624px;top:814px" width="28" height="28" viewBox="0 0 28 28"><rect x="0" y="0" width="27" height="24" fill="#fff"/><rect x="0" y="1" width="1" height="1" fill="#1a1a1a"/><rect x="0" y="3" width="1" height="1" fill="#1a1a1a"/><rect x="0" y="5" width="1" height="1" fill="#1a1a1a"/><rect x="0" y="7" width="1" height="1" fill="#1a1a1a"/><rect x="0" y="10" width="1" height="1" fill="#1a1a1a"/><rect x="0" y="11" width="1" height="1" fill="#1a1a1a"/><rect x="0" y="13" width="1" height="1" fill="#1a1a1a"/><rect x="0" y="14" width="1" height="1" fill="#1a1a1a"/><rect x="0" y="15" width="1" height="1" fill="#1a1a1a"/><rect x="0" y="19" width="1" height="1" fill="#1a1a1a"/><rect x="0" y="21" width="1" height="1" fill="#1a1a1a"/><rect x="0" y="22" width="1" height="1" fill="#1a1a1a"/><rect x="0" y="23" width="1" height="1" fill="#1a1a1a"/><rect x="1" y="0" width="1" height="1" fill="#1a1a1a"/><rect x="1" y="1" width="1" height="1" fill="#1a1a1a"/><rect x="1" y="2" width="1" height="1" fill="#1a1a1a"/><rect x="1" y="3" width="1" height="1" fill="#1a1a1a"/><rect x="1" y="4" width="1" height="1" fill="#1a1a1a"/><rect x="1" y="6" width="1" height="1" fill="#1a1a1a"/><rect x="1" y="7" width="1" height="1" fill="#1a1a1a"/><rect x="1" y="10" width="1" height="1" fill="#1a1a1a"/><rect x="1" y="12" width="1" height="1" fill="#1a1a1a"/><rect x="1" y="13" width="1" height="1" fill="#1a1a1a"/><rect x="1" y="14" width="1" height="1" fill="#1a1a1a"/><rect x="1" y="16" width="1" height="1" fill="#1a1a1a"/><rect x="1" y="18" width="1" height="1" fill="#1a1a1a"/><rect x="1" y="19" width="1" height="1" fill="#1a1a1a"/><rect x="1" y="21" width="1" height="1" fill="#1a1a1a"/><rect x="1" y="22" width="1" height="1" fill="#1a1a1a"/><rect x="1" y="23" width="1" height="1" fill="#1a1a1a"/><rect x="2" y="0" width="1" height="1" fill="#1a1a1a"/><rect x="2" y="2" width="1" height="1" fill="#1a1a1a"/><rect x="2" y="3" width="1" height="1" fill="#1a1a1a"/><rect x="2" y="4" width="1" height="1" fill="#1a1a1a"/><rect x="2" y="5" width="1" height="1" fill="#1a1a1a"/><rect x="2" y="7" width="1" height="1" fill="#1a1a1a"/><rect x="2" y="8" width="1" height="1" fill="#1a1a1a"/><rect x="2" y="9" width="1" height="1" fill="#1a1a1a"/><rect x="2" y="11" width="1" height="1" fill="#1a1a1a"/><rect x="2" y="13" width="1" height="1" fill="#1a1a1a"/><rect x="2" y="14" width="1" height="1" fill="#1a1a1a"/><rect x="2" y="15" width="1" height="1" fill="#1a1a1a"/><rect x="2" y="18" width="1" height="1" fill="#1a1a1a"/><rect x="2" y="19" width="1" height="1" fill="#1a1a1a"/><rect x="2" y="20" width="1" height="1" fill="#1a1a1a"/><rect x="2" y="21" width="1" height="1" fill="#1a1a1a"/><rect x="3" y="1" width="1" height="1" fill="#1a1a1a"/><rect x="3" y="21" width="1" height="1" fill="#1a1a1a"/><rect x="4" y="0" width="1" height="1" fill="#1a1a1a"/><rect x="4" y="1" width="1" height="1" fill="#1a1a1a"/><rect x="4" y="21" width="1" height="1" fill="#1a1a1a"/><rect x="4" y="23" width="1" height="1" fill="#1a1a1a"/><rect x="5" y="0" width="1" height="1" fill="#1a1a1a"/><rect x="5" y="21" width="1" height="1" fill="#1a1a1a"/><rect x="5" y="22" width="1" height="1" fill="#1a1a1a"/><rect x="6" y="0" width="1" height="1" fill="#1a1a1a"/><rect x="6" y="1" width="1" height="1" fill="#1a1a1a"/><rect x="6" y="21" width="1" height="1" fill="#1a1a1a"/><rect x="6" y="22" width="1" height="1" fill="#1a1a1a"/><rect x="6" y="23" width="1" height="1" fill="#1a1a1a"/><rect x="7" y="0" width="1" height="1" fill="#1a1a1a"/><rect x="7" y="1" width="1" height="1" fill="#1a1a1a"/><rect x="7" y="21" width="1" height="1" fill="#1a1a1a"/><rect x="7" y="22" width="1" height="1" fill="#1a1a1a"/><rect x="7" y="23" width="1" height="1" fill="#1a1a1a"/><rect x="8" y="1" width="1" height="1" fill="#1a1a1a"/><rect x="8" y="21" width="1" height="1" fill="#1a1a1a"/><rect x="9" y="21" width="1" height="1" fill="#1a1a1a"/><rect x="9" y="22" width="1" height="1" fill="#1a1a1a"/><rect x="9" y="23" width="1" height="1" fill="#1a1a1a"/><rect x="10" y="0" width="1" height="1" fill="#1a1a1a"/><rect x="10" y="1" width="1" height="1" fill="#1a1a1a"/><rect x="10" y="21" width="1" height="1" fill="#1a1a1a"/><rect x="10" y="22" width="1" height="1" fill="#1a1a1a"/><rect x="11" y="0" width="1" height="1" fill="#1a1a1a"/><rect x="11" y="21" width="1" height="1" fill="#1a1a1a"/><rect x="11" y="22" width="1" height="1" fill="#1a1a1a"/><rect x="11" y="23" width="1" height="1" fill="#1a1a1a"/><rect x="12" y="0" width="1" height="1" fill="#1a1a1a"/><rect x="12" y="21" width="1" height="1" fill="#1a1a1a"/><rect x="12" y="22" width="1" height="1" fill="#1a1a1a"/><rect x="12" y="23" width="1" height="1" fill="#1a1a1a"/><rect x="13" y="21" width="1" height="1" fill="#1a1a1a"/><rect x="13" y="23" width="1" height="1" fill="#1a1a1a"/><rect x="14" y="0" width="1" height="1" fill="#1a1a1a"/><rect x="14" y="21" width="1" height="1" fill="#1a1a1a"/><rect x="14" y="22" width="1" height="1" fill="#1a1a1a"/><rect x="14" y="23" width="1" height="1" fill="#1a1a1a"/><rect x="15" y="1" width="1" height="1" fill="#1a1a1a"/><rect x="15" y="21" width="1" height="1" fill="#1a1a1a"/><rect x="15" y="23" width="1" height="1" fill="#1a1a1a"/><rect x="16" y="1" width="1" height="1" fill="#1a1a1a"/><rect x="16" y="22" width="1" height="1" fill="#1a1a1a"/><rect x="16" y="23" width="1" height="1" fill="#1a1a1a"/><rect x="17" y="1" width="1" height="1" fill="#1a1a1a"/><rect x="17" y="21" width="1" height="1" fill="#1a1a1a"/><rect x="17" y="22" width="1" height="1" fill="#1a1a1a"/><rect x="18" y="0" width="1" height="1" fill="#1a1a1a"/><rect x="18" y="1" width="1" height="1" fill="#1a1a1a"/><rect x="18" y="21" width="1" height="1" fill="#1a1a1a"/><rect x="18" y="22" width="1" height="1" fill="#1a1a1a"/><rect x="18" y="23" width="1" height="1" fill="#1a1a1a"/><rect x="19" y="0" width="1" height="1" fill="#1a1a1a"/><rect x="19" y="1" width="1" height="1" fill="#1a1a1a"/><rect x="19" y="21" width="1" height="1" fill="#1a1a1a"/><rect x="20" y="0" width="1" height="1" fill="#1a1a1a"/><rect x="20" y="22" width="1" height="1" fill="#1a1a1a"/><rect x="20" y="23" width="1" height="1" fill="#1a1a1a"/><rect x="21" y="0" width="1" height="1" fill="#1a1a1a"/><rect x="21" y="1" width="1" height="1" fill="#1a1a1a"/><rect x="21" y="21" width="1" height="1" fill="#1a1a1a"/><rect x="21" y="23" width="1" height="1" fill="#1a1a1a"/><rect x="22" y="1" width="1" height="1" fill="#1a1a1a"/><rect x="22" y="22" width="1" height="1" fill="#1a1a1a"/><rect x="22" y="23" width="1" height="1" fill="#1a1a1a"/><rect x="23" y="0" width="1" height="1" fill="#1a1a1a"/><rect x="23" y="1" width="1" height="1" fill="#1a1a1a"/><rect x="23" y="23" width="1" height="1" fill="#1a1a1a"/><rect x="24" y="1" width="1" height="1" fill="#1a1a1a"/><rect x="24" y="2" width="1" height="1" fill="#555"/><rect x="24" y="4" width="1" height="1" fill="#555"/><rect x="24" y="19" width="1" height="1" fill="#555"/><rect x="24" y="21" width="1" height="1" fill="#1a1a1a"/><rect x="24" y="22" width="1" height="1" fill="#1a1a1a"/><rect x="25" y="0" width="1" height="1" fill="#1a1a1a"/><rect x="25" y="1" width="1" height="1" fill="#1a1a1a"/><rect x="25" y="5" width="1" height="1" fill="#555"/><rect x="25" y="14" width="1" height="1" fill="#555"/><rect x="25" y="21" width="1" height="1" fill="#1a1a1a"/><rect x="25" y="22" width="1" height="1" fill="#1a1a1a"/><rect x="26" y="0" width="1" height="1" fill="#1a1a1a"/><rect x="26" y="1" width="1" height="1" fill="#1a1a1a"/><rect x="26" y="7" width="1" height="1" fill="#555"/><rect x="26" y="10" width="1" height="1" fill="#555"/><rect x="26" y="16" width="1" height="1" fill="#555"/><rect x="26" y="18" width="1" height="1" fill="#555"/><rect x="26" y="19" width="1" height="1" fill="#555"/><rect x="26" y="22" width="1" height="1" fill="#1a1a1a"/><rect x="3" y="2" width="5" height="19" fill="#a9adad"/><rect x="8" y="2" width="9" height="19" fill="#7f9595"/><rect x="17" y="2" width="7" height="9" fill="#7c7c7c"/><rect x="17" y="11" width="7" height="10" fill="#8a8a8a"/><rect x="1" y="25" width="2" height="2" fill="#5cb85c"/><rect x="5" y="25.500" width="20" height="1" fill="#d0d0d0"/></svg>
<div class="td ak" style="left:1704px;top:817.3px">修改</div><div class="td ak" style="left:1755px;top:817.3px">详情</div><svg class="abs" style="left:1805px;top:823.8px" width="22" height="5" viewBox="0 0 22 5" fill="#999"><circle cx="2.500" cy="2.500" r="2"/><circle cx="11" cy="2.500" r="2"/><circle cx="19.500" cy="2.500" r="2"/></svg>
<svg class="abs" style="left:1624px;top:861px" width="28" height="28" viewBox="0 0 28 28"><rect x="0" y="0" width="27" height="24" fill="#fff"/><rect x="0" y="0" width="1" height="1" fill="#1a1a1a"/><rect x="0" y="1" width="1" height="1" fill="#1a1a1a"/><rect x="0" y="2" width="1" height="1" fill="#1a1a1a"/><rect x="0" y="3" width="1" height="1" fill="#1a1a1a"/><rect x="0" y="4" width="1" height="1" fill="#1a1a1a"/><rect x="0" y="5" width="1" height="1" fill="#1a1a1a"/><rect x="0" y="6" width="1" height="1" fill="#1a1a1a"/><rect x="0" y="7" width="1" height="1" fill="#1a1a1a"/><rect x="0" y="8" width="1" height="1" fill="#1a1a1a"/><rect x="0" y="9" width="1" height="1" fill="#1a1a1a"/><rect x="0" y="10" width="1" height="1" fill="#1a1a1a"/><rect x="0" y="11" width="1" height="1" fill="#1a1a1a"/><rect x="0" y="13" width="1" height="1" fill="#1a1a1a"/><rect x="0" y="16" width="1" height="1" fill="#1a1a1a"/><rect x="0" y="19" width="1" height="1" fill="#1a1a1a"/><rect x="0" y="20" width="1" height="1" fill="#1a1a1a"/><rect x="0" y="21" width="1" height="1" fill="#1a1a1a"/><rect x="0" y="22" width="1" height="1" fill="#1a1a1a"/><rect x="0" y="23" width="1" height="1" fill="#1a1a1a"/><rect x="1" y="0" width="1" height="1" fill="#1a1a1a"/><rect x="1" y="1" width="1" height="1" fill="#1a1a1a"/><rect x="1" y="2" width="1" height="1" fill="#1a1a1a"/><rect x="1" y="4" width="1" height="1" fill="#1a1a1a"/><rect x="1" y="5" width="1" height="1" fill="#1a1a1a"/><rect x="1" y="6" width="1" height="1" fill="#1a1a1a"/><rect x="1" y="8" width="1" height="1" fill="#1a1a1a"/><rect x="1" y="9" width="1" height="1" fill="#1a1a1a"/><rect x="1" y="13" width="1" height="1" fill="#1a1a1a"/><rect x="1" y="14" width="1" height="1" fill="#1a1a1a"/><rect x="1" y="15" width="1" height="1" fill="#1a1a1a"/><rect x="1" y="16" width="1" height="1" fill="#1a1a1a"/><rect x="1" y="17" width="1" height="1" fill="#1a1a1a"/><rect x="1" y="18" width="1" height="1" fill="#1a1a1a"/><rect x="1" y="19" width="1" height="1" fill="#1a1a1a"/><rect x="1" y="21" width="1" height="1" fill="#1a1a1a"/><rect x="1" y="23" width="1" height="1" fill="#1a1a1a"/><rect x="2" y="1" width="1" height="1" fill="#1a1a1a"/><rect x="2" y="3" width="1" height="1" fill="#1a1a1a"/><rect x="2" y="4" width="1" height="1" fill="#1a1a1a"/><rect x="2" y="5" width="1" height="1" fill="#1a1a1a"/><rect x="2" y="6" width="1" height="1" fill="#1a1a1a"/><rect x="2" y="7" width="1" height="1" fill="#1a1a1a"/><rect x="2" y="8" width="1" height="1" fill="#1a1a1a"/><rect x="2" y="9" width="1" height="1" fill="#1a1a1a"/><rect x="2" y="10" width="1" height="1" fill="#1a1a1a"/><rect x="2" y="11" width="1" height="1" fill="#1a1a1a"/><rect x="2" y="12" width="1" height="1" fill="#1a1a1a"/><rect x="2" y="13" width="1" height="1" fill="#1a1a1a"/><rect x="2" y="14" width="1" height="1" fill="#1a1a1a"/><rect x="2" y="15" width="1" height="1" fill="#1a1a1a"/><rect x="2" y="18" width="1" height="1" fill="#1a1a1a"/><rect x="2" y="20" width="1" height="1" fill="#1a1a1a"/><rect x="2" y="21" width="1" height="1" fill="#1a1a1a"/><rect x="2" y="22" width="1" height="1" fill="#1a1a1a"/><rect x="2" y="23" width="1" height="1" fill="#1a1a1a"/><rect x="3" y="0" width="1" height="1" fill="#1a1a1a"/><rect x="3" y="1" width="1" height="1" fill="#1a1a1a"/><rect x="3" y="22" width="1" height="1" fill="#1a1a1a"/><rect x="3" y="23" width="1" height="1" fill="#1a1a1a"/><rect x="4" y="21" width="1" height="1" fill="#1a1a1a"/><rect x="4" y="22" width="1" height="1" fill="#1a1a1a"/><rect x="4" y="23" width="1" height="1" fill="#1a1a1a"/><rect x="5" y="0" width="1" height="1" fill="#1a1a1a"/><rect x="5" y="1" width="1" height="1" fill="#1a1a1a"/><rect x="5" y="21" width="1" height="1" fill="#1a1a1a"/><rect x="5" y="23" width="1" height="1" fill="#1a1a1a"/><rect x="6" y="0" width="1" height="1" fill="#1a1a1a"/><rect x="6" y="1" width="1" height="1" fill="#1a1a1a"/><rect x="6" y="21" width="1" height="1" fill="#1a1a1a"/><rect x="6" y="22" width="1" height="1" fill="#1a1a1a"/><rect x="7" y="0" width="1" height="1" fill="#1a1a1a"/><rect x="7" y="1" width="1" height="1" fill="#1a1a1a"/><rect x="7" y="21" width="1" height="1" fill="#1a1a1a"/><rect x="7" y="22" width="1" height="1" fill="#1a1a1a"/><rect x="7" y="23" width="1" height="1" fill="#1a1a1a"/><rect x="8" y="1" width="1" height="1" fill="#1a1a1a"/><rect x="8" y="21" width="1" height="1" fill="#1a1a1a"/><rect x="8" y="22" width="1" height="1" fill="#1a1a1a"/><rect x="8" y="23" width="1" height="1" fill="#1a1a1a"/><rect x="9" y="0" width="1" height="1" fill="#1a1a1a"/><rect x="9" y="1" width="1" height="1" fill="#1a1a1a"/><rect x="9" y="21" width="1" height="1" fill="#1a1a1a"/><rect x="9" y="23" width="1" height="1" fill="#1a1a1a"/><rect x="10" y="21" width="1" height="1" fill="#1a1a1a"/><rect x="10" y="22" width="1" height="1" fill="#1a1a1a"/><rect x="10" y="23" width="1" height="1" fill="#1a1a1a"/><rect x="11" y="0" width="1" height="1" fill="#1a1a1a"/><rect x="11" y="22" width="1" height="1" fill="#1a1a1a"/><rect x="11" y="23" width="1" height="1" fill="#1a1a1a"/><rect x="12" y="0" width="1" height="1" fill="#1a1a1a"/><rect x="12" y="1" width="1" height="1" fill="#1a1a1a"/><rect x="12" y="21" width="1" height="1" fill="#1a1a1a"/><rect x="12" y="22" width="1" height="1" fill="#1a1a1a"/><rect x="12" y="23" width="1" height="1" fill="#1a1a1a"/><rect x="13" y="1" width="1" height="1" fill="#1a1a1a"/><rect x="13" y="21" width="1" height="1" fill="#1a1a1a"/><rect x="13" y="22" width="1" height="1" fill="#1a1a1a"/><rect x="13" y="23" width="1" height="1" fill="#1a1a1a"/><rect x="14" y="0" width="1" height="1" fill="#1a1a1a"/><rect x="14" y="1" width="1" height="1" fill="#1a1a1a"/><rect x="14" y="21" width="1" height="1" fill="#1a1a1a"/><rect x="14" y="22" width="1" height="1" fill="#1a1a1a"/><rect x="14" y="23" width="1" height="1" fill="#1a1a1a"/><rect x="15" y="0" width="1" height="1" fill="#1a1a1a"/><rect x="15" y="21" width="1" height="1" fill="#1a1a1a"/><rect x="15" y="22" width="1" height="1" fill="#1a1a1a"/><rect x="16" y="1" width="1" height="1" fill="#1a1a1a"/><rect x="16" y="21" width="1" height="1" fill="#1a1a1a"/><rect x="16" y="22" width="1" height="1" fill="#1a1a1a"/><rect x="17" y="0" width="1" height="1" fill="#1a1a1a"/><rect x="17" y="1" width="1" height="1" fill="#1a1a1a"/><rect x="17" y="21" width="1" height="1" fill="#1a1a1a"/><rect x="17" y="22" width="1" height="1" fill="#1a1a1a"/><rect x="18" y="0" width="1" height="1" fill="#1a1a1a"/><rect x="18" y="1" width="1" height="1" fill="#1a1a1a"/><rect x="18" y="21" width="1" height="1" fill="#1a1a1a"/><rect x="18" y="22" width="1" height="1" fill="#1a1a1a"/><rect x="18" y="23" width="1" height="1" fill="#1a1a1a"/><rect x="19" y="1" width="1" height="1" fill="#1a1a1a"/><rect x="19" y="21" width="1" height="1" fill="#1a1a1a"/><rect x="19" y="22" width="1" height="1" fill="#1a1a1a"/><rect x="20" y="0" width="1" height="1" fill="#1a1a1a"/><rect x="20" y="1" width="1" height="1" fill="#1a1a1a"/><rect x="20" y="21" width="1" height="1" fill="#1a1a1a"/><rect x="21" y="0" width="1" height="1" fill="#1a1a1a"/><rect x="21" y="1" width="1" height="1" fill="#1a1a1a"/><rect x="21" y="23" width="1" height="1" fill="#1a1a1a"/><rect x="22" y="0" width="1" height="1" fill="#1a1a1a"/><rect x="22" y="21" width="1" height="1" fill="#1a1a1a"/><rect x="22" y="22" width="1" height="1" fill="#1a1a1a"/><rect x="22" y="23" width="1" height="1" fill="#1a1a1a"/><rect x="23" y="0" width="1" height="1" fill="#1a1a1a"/><rect x="23" y="23" width="1" height="1" fill="#1a1a1a"/><rect x="24" y="0" width="1" height="1" fill="#1a1a1a"/><rect x="24" y="6" width="1" height="1" fill="#555"/><rect x="24" y="7" width="1" height="1" fill="#555"/><rect x="24" y="10" width="1" height="1" fill="#555"/><rect x="24" y="12" width="1" height="1" fill="#555"/><rect x="24" y="13" width="1" height="1" fill="#555"/><rect x="24" y="15" width="1" height="1" fill="#555"/><rect x="24" y="16" width="1" height="1" fill="#555"/><rect x="24" y="17" width="1" height="1" fill="#555"/><rect x="24" y="18" width="1" height="1" fill="#555"/><rect x="24" y="19" width="1" height="1" fill="#555"/><rect x="24" y="23" width="1" height="1" fill="#1a1a1a"/><rect x="25" y="1" width="1" height="1" fill="#1a1a1a"/><rect x="25" y="4" width="1" height="1" fill="#555"/><rect x="25" y="6" width="1" height="1" fill="#555"/><rect x="25" y="9" width="1" height="1" fill="#555"/><rect x="25" y="10" width="1" height="1" fill="#555"/><rect x="25" y="11" width="1" height="1" fill="#555"/><rect x="25" y="19" width="1" height="1" fill="#555"/><rect x="25" y="21" width="1" height="1" fill="#1a1a1a"/><rect x="25" y="22" width="1" height="1" fill="#1a1a1a"/><rect x="25" y="23" width="1" height="1" fill="#1a1a1a"/><rect x="26" y="1" width="1" height="1" fill="#1a1a1a"/><rect x="26" y="2" width="1" height="1" fill="#555"/><rect x="26" y="3" width="1" height="1" fill="#555"/><rect x="26" y="8" width="1" height="1" fill="#555"/><rect x="26" y="10" width="1" height="1" fill="#555"/><rect x="26" y="12" width="1" height="1" fill="#555"/><rect x="26" y="18" width="1" height="1" fill="#555"/><rect x="26" y="21" width="1" height="1" fill="#1a1a1a"/><rect x="26" y="23" width="1" height="1" fill="#1a1a1a"/><rect x="3" y="2" width="5" height="19" fill="#a9adad"/><rect x="8" y="2" width="9" height="19" fill="#7f9595"/><rect x="17" y="2" width="7" height="9" fill="#7c7c7c"/><rect x="17" y="11" width="7" height="10" fill="#8a8a8a"/><rect x="1" y="25" width="2" height="2" fill="#5cb85c"/><rect x="5" y="25.500" width="20" height="1" fill="#d0d0d0"/></svg>
<div class="td ak" style="left:1704px;top:864.1px">修改</div><div class="td ak" style="left:1755px;top:864.1px">详情</div><svg class="abs" style="left:1805px;top:870.6px" width="22" height="5" viewBox="0 0 22 5" fill="#999"><circle cx="2.500" cy="2.500" r="2"/><circle cx="11" cy="2.500" r="2"/><circle cx="19.500" cy="2.500" r="2"/></svg>
<div class="abs" style="left:242px;top:897px;width:1630px;height:21px;background:#f9f9f9"></div>
<svg class="abs" style="left:254px;top:901px" width="11" height="14" viewBox="0 0 11 14"><path d="M10 1.500V12.500Q10 14 8.500 13L1.500 8Q0 7 1.500 6L8.500 1Q10 0 10 1.500z" fill="#8a8a8a"/></svg>
<div class="abs" style="left:277px;top:901px;width:1024px;height:14px;border-radius:7px;background:#8a8a8a"></div>
<svg class="abs" style="left:1852px;top:901px" width="11" height="14" viewBox="0 0 11 14"><path d="M1 1.500V12.500Q1 14 2.500 13L9.500 8Q11 7 9.500 6L2.500 1Q1 0 1 1.500z" fill="#8a8a8a"/></svg>

<div class="cb" style="left:260px;top:932px"></div>
<div class="abs" style="left:294px;top:933px;font-size:14px;line-height:20px;color:#333">全选</div>
<div class="abs" style="left:1231px;top:933px;font-size:15px;line-height:20px;color:#333;white-space:nowrap">共 259 条</div>
<svg class="abs" style="left:1318px;top:934px" width="10" height="16" viewBox="0 0 10 16"><path d="M8.500 1.500L2 8l6.500 6.500" stroke="#ccc" stroke-width="1.600" fill="none"/></svg>
<div class="abs" style="left:1345px;top:927px;width:38px;height:31px;border-radius:2px;background:#139688;color:#fff;font-size:15px;line-height:31px;text-align:center">1</div>
<div class="abs" style="left:1383px;top:927px;width:36px;height:31px;font-size:15px;line-height:31px;text-align:center;color:#333">2</div>
<div class="abs" style="left:1419px;top:927px;width:36px;height:31px;font-size:15px;line-height:31px;text-align:center;color:#333">3</div>
<svg class="abs" style="left:1473px;top:934px" width="10" height="16" viewBox="0 0 10 16"><path d="M1.500 1.500L8 8l-6.500 6.500" stroke="#333" stroke-width="1.600" fill="none"/></svg>
<div class="abs" style="left:1501px;top:927px;width:93px;height:31px;border:1px solid #e2e2e2;border-radius:2px"></div>
<div class="abs" style="left:1510px;top:933px;font-size:15px;line-height:20px;color:#333;white-space:nowrap">10 条/页</div>
<svg class="abs" style="left:1575px;top:938px" width="12" height="8" viewBox="0 0 12 8"><path d="M1 1.500l5 4.500 5-4.500" stroke="#333" stroke-width="1.600" fill="none"/></svg>
<svg class="abs" style="left:1633px;top:932px" width="22" height="22" viewBox="0 0 22 22"><path d="M18.500 8A8.500 8.500 0 1 0 19.300 12" stroke="#333" stroke-width="1.500" fill="none"/><path d="M19 2.500v5.500h-5.500" stroke="#333" stroke-width="1.500" fill="none"/></svg>
<div class="abs" style="left:1682px;top:933px;font-size:15px;line-height:20px;color:#999">到第</div>
<div class="abs" style="left:1722px;top:927px;width:48px;height:31px;border:1px solid #e2e2e2;border-radius:2px;font-size:15px;line-height:29px;text-align:center;color:#333">1</div>
<div class="abs" style="left:1783px;top:933px;font-size:15px;line-height:20px;color:#999">页</div>
<div class="abs" style="left:1809px;top:927px;width:54px;height:31px;border:1px solid #e2e2e2;border-radius:2px;font-size:15px;line-height:29px;text-align:center;color:#333">确定</div>

<!--/MAIN3-->
<div id="vsb" class="abs" style="left:1897px;top:72px;width:23px;height:899px;background:#fafafa"></div>
<svg class="abs" style="left:1902px;top:84px" width="14" height="11" viewBox="0 0 14 11"><path d="M1.500 10H12.500Q14 10 13 8.500L8 1.500Q7 0 6 1.500L1 8.500Q0 10 1.500 10z" fill="#8a8a8a"/></svg>
<div class="abs" style="left:1902px;top:107px;width:14px;height:802px;border-radius:7px;background:#8a8a8a"></div>
<svg class="abs" style="left:1902px;top:948px" width="14" height="11" viewBox="0 0 14 11"><path d="M1.500 1H12.500Q14 1 13 2.500L8 9.500Q7 11 6 9.500L1 2.500Q0 1 1.500 1z" fill="#8a8a8a"/></svg>
<svg id="tlc" class="abs" style="left:0;top:0" width="8" height="8" viewBox="0 0 8 8"><path d="M0 0H7Q3 3 0 7z" fill="#fff"/></svg>
<svg id="blc" class="abs" style="left:0;top:963px" width="8" height="8" viewBox="0 0 8 8"><path d="M0 0Q3 5 6.500 8H0z" fill="#fff"/></svg>
</body></html>
